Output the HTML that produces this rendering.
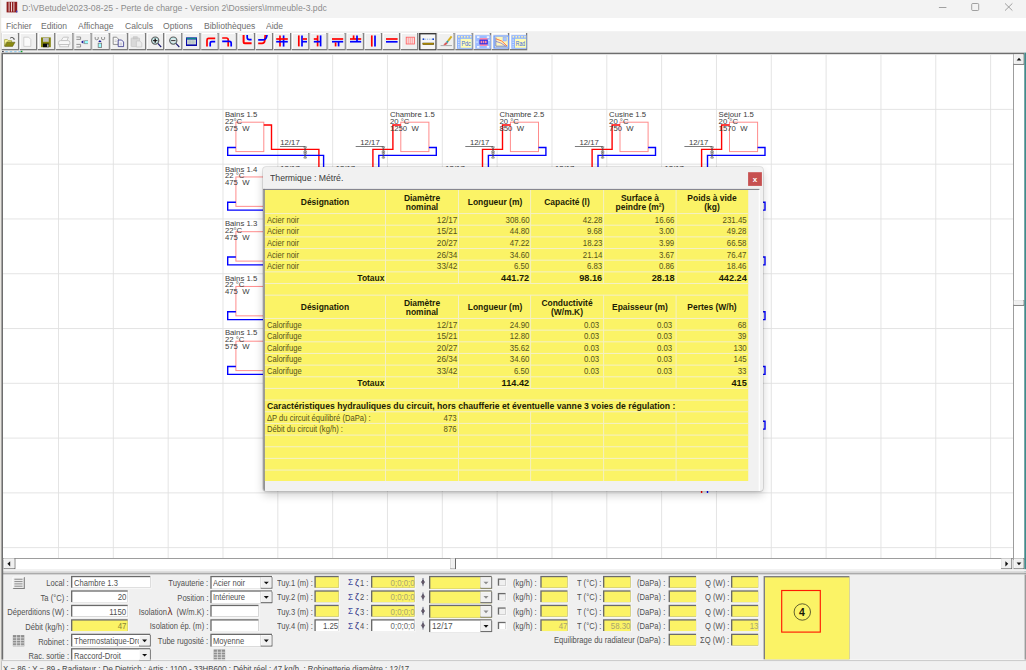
<!DOCTYPE html>
<html lang="fr"><head><meta charset="utf-8"><title>Perte de charge</title>
<style>
html,body{margin:0;padding:0;background:#f0f0f0}
#app{position:relative;width:1026px;height:670px;overflow:hidden;background:#f0f0f0;font-family:"Liberation Sans",sans-serif}
#app div,#app span,#app svg{box-sizing:content-box}
.t{position:absolute;white-space:pre;font-family:"Liberation Sans",sans-serif}
</style></head><body><div id="app">
<svg style="position:absolute;left:0;top:0" width="1026" height="670" viewBox="0 0 1026 670"><rect x="0.00" y="0.00" width="1026.00" height="18.00" fill="#f3f3f3"/><rect x="0.00" y="18.00" width="1026.00" height="13.40" fill="#ffffff"/><rect x="0.00" y="31.40" width="1026.00" height="21.20" fill="#f0f0f0"/><rect x="1.60" y="33.00" width="17.45" height="17.30" fill="#7b7b7b"/><rect x="1.60" y="33.00" width="16.15" height="16.00" fill="#ffffff"/><rect x="2.60" y="34.00" width="15.15" height="15.00" fill="#f0f0f0"/><rect x="19.75" y="33.00" width="17.45" height="17.30" fill="#7b7b7b"/><rect x="19.75" y="33.00" width="16.15" height="16.00" fill="#ffffff"/><rect x="20.75" y="34.00" width="15.15" height="15.00" fill="#f0f0f0"/><rect x="37.90" y="33.00" width="17.45" height="17.30" fill="#7b7b7b"/><rect x="37.90" y="33.00" width="16.15" height="16.00" fill="#ffffff"/><rect x="38.90" y="34.00" width="15.15" height="15.00" fill="#f0f0f0"/><rect x="56.05" y="33.00" width="17.45" height="17.30" fill="#7b7b7b"/><rect x="56.05" y="33.00" width="16.15" height="16.00" fill="#ffffff"/><rect x="57.05" y="34.00" width="15.15" height="15.00" fill="#f0f0f0"/><rect x="74.20" y="33.00" width="17.45" height="17.30" fill="#7b7b7b"/><rect x="74.20" y="33.00" width="16.15" height="16.00" fill="#ffffff"/><rect x="75.20" y="34.00" width="15.15" height="15.00" fill="#f0f0f0"/><rect x="92.35" y="33.00" width="17.45" height="17.30" fill="#7b7b7b"/><rect x="92.35" y="33.00" width="16.15" height="16.00" fill="#ffffff"/><rect x="93.35" y="34.00" width="15.15" height="15.00" fill="#f0f0f0"/><rect x="110.50" y="33.00" width="17.45" height="17.30" fill="#7b7b7b"/><rect x="110.50" y="33.00" width="16.15" height="16.00" fill="#ffffff"/><rect x="111.50" y="34.00" width="15.15" height="15.00" fill="#f0f0f0"/><rect x="128.65" y="33.00" width="17.45" height="17.30" fill="#7b7b7b"/><rect x="128.65" y="33.00" width="16.15" height="16.00" fill="#ffffff"/><rect x="129.65" y="34.00" width="15.15" height="15.00" fill="#f0f0f0"/><rect x="146.80" y="33.00" width="17.45" height="17.30" fill="#7b7b7b"/><rect x="146.80" y="33.00" width="16.15" height="16.00" fill="#ffffff"/><rect x="147.80" y="34.00" width="15.15" height="15.00" fill="#f0f0f0"/><rect x="164.95" y="33.00" width="17.45" height="17.30" fill="#7b7b7b"/><rect x="164.95" y="33.00" width="16.15" height="16.00" fill="#ffffff"/><rect x="165.95" y="34.00" width="15.15" height="15.00" fill="#f0f0f0"/><rect x="183.10" y="33.00" width="17.45" height="17.30" fill="#7b7b7b"/><rect x="183.10" y="33.00" width="16.15" height="16.00" fill="#ffffff"/><rect x="184.10" y="34.00" width="15.15" height="15.00" fill="#f0f0f0"/><rect x="201.25" y="33.00" width="17.45" height="17.30" fill="#7b7b7b"/><rect x="201.25" y="33.00" width="16.15" height="16.00" fill="#ffffff"/><rect x="202.25" y="34.00" width="15.15" height="15.00" fill="#f0f0f0"/><rect x="219.40" y="33.00" width="17.45" height="17.30" fill="#7b7b7b"/><rect x="219.40" y="33.00" width="16.15" height="16.00" fill="#ffffff"/><rect x="220.40" y="34.00" width="15.15" height="15.00" fill="#f0f0f0"/><rect x="237.55" y="33.00" width="17.45" height="17.30" fill="#7b7b7b"/><rect x="237.55" y="33.00" width="16.15" height="16.00" fill="#ffffff"/><rect x="238.55" y="34.00" width="15.15" height="15.00" fill="#f0f0f0"/><rect x="255.70" y="33.00" width="17.45" height="17.30" fill="#7b7b7b"/><rect x="255.70" y="33.00" width="16.15" height="16.00" fill="#ffffff"/><rect x="256.70" y="34.00" width="15.15" height="15.00" fill="#f0f0f0"/><rect x="273.85" y="33.00" width="17.45" height="17.30" fill="#7b7b7b"/><rect x="273.85" y="33.00" width="16.15" height="16.00" fill="#ffffff"/><rect x="274.85" y="34.00" width="15.15" height="15.00" fill="#f0f0f0"/><rect x="292.00" y="33.00" width="17.45" height="17.30" fill="#7b7b7b"/><rect x="292.00" y="33.00" width="16.15" height="16.00" fill="#ffffff"/><rect x="293.00" y="34.00" width="15.15" height="15.00" fill="#f0f0f0"/><rect x="310.15" y="33.00" width="17.45" height="17.30" fill="#7b7b7b"/><rect x="310.15" y="33.00" width="16.15" height="16.00" fill="#ffffff"/><rect x="311.15" y="34.00" width="15.15" height="15.00" fill="#f0f0f0"/><rect x="328.30" y="33.00" width="17.45" height="17.30" fill="#7b7b7b"/><rect x="328.30" y="33.00" width="16.15" height="16.00" fill="#ffffff"/><rect x="329.30" y="34.00" width="15.15" height="15.00" fill="#f0f0f0"/><rect x="346.45" y="33.00" width="17.45" height="17.30" fill="#7b7b7b"/><rect x="346.45" y="33.00" width="16.15" height="16.00" fill="#ffffff"/><rect x="347.45" y="34.00" width="15.15" height="15.00" fill="#f0f0f0"/><rect x="364.60" y="33.00" width="17.45" height="17.30" fill="#7b7b7b"/><rect x="364.60" y="33.00" width="16.15" height="16.00" fill="#ffffff"/><rect x="365.60" y="34.00" width="15.15" height="15.00" fill="#f0f0f0"/><rect x="382.75" y="33.00" width="17.45" height="17.30" fill="#7b7b7b"/><rect x="382.75" y="33.00" width="16.15" height="16.00" fill="#ffffff"/><rect x="383.75" y="34.00" width="15.15" height="15.00" fill="#f0f0f0"/><rect x="400.90" y="33.00" width="17.45" height="17.30" fill="#7b7b7b"/><rect x="400.90" y="33.00" width="16.15" height="16.00" fill="#ffffff"/><rect x="401.90" y="34.00" width="15.15" height="15.00" fill="#f0f0f0"/><rect x="419.05" y="33.00" width="17.45" height="17.30" fill="#3a3a3a"/><rect x="420.45" y="34.40" width="14.95" height="14.80" fill="#f6f6f6"/><rect x="437.20" y="33.00" width="17.45" height="17.30" fill="#7b7b7b"/><rect x="437.20" y="33.00" width="16.15" height="16.00" fill="#ffffff"/><rect x="438.20" y="34.00" width="15.15" height="15.00" fill="#f0f0f0"/><rect x="455.35" y="33.00" width="17.45" height="17.30" fill="#7b7b7b"/><rect x="455.35" y="33.00" width="16.15" height="16.00" fill="#ffffff"/><rect x="456.35" y="34.00" width="15.15" height="15.00" fill="#f0f0f0"/><rect x="473.50" y="33.00" width="17.45" height="17.30" fill="#7b7b7b"/><rect x="473.50" y="33.00" width="16.15" height="16.00" fill="#ffffff"/><rect x="474.50" y="34.00" width="15.15" height="15.00" fill="#f0f0f0"/><rect x="491.65" y="33.00" width="17.45" height="17.30" fill="#7b7b7b"/><rect x="491.65" y="33.00" width="16.15" height="16.00" fill="#ffffff"/><rect x="492.65" y="34.00" width="15.15" height="15.00" fill="#f0f0f0"/><rect x="509.80" y="33.00" width="17.45" height="17.30" fill="#7b7b7b"/><rect x="509.80" y="33.00" width="16.15" height="16.00" fill="#ffffff"/><rect x="510.80" y="34.00" width="15.15" height="15.00" fill="#f0f0f0"/><g>
<path d="M4.6 39.6 L7.4 39.6 L8.2 40.6 L11.6 40.6 L11.6 42 L6.4 42 L4.6 46.2 Z" fill="#fffb9a" stroke="#8a8a20" stroke-width="0.6"/>
<path d="M4.8 46.4 L7 42.2 L15 42.2 L12.6 46.4 Z" fill="#8a8a10" stroke="#55550a" stroke-width="0.5"/>
<path d="M10 38.2 Q12 36.4 13.8 38.2" fill="none" stroke="#222" stroke-width="0.7"/>
<path d="M12.6 38.4 L14.6 38.4 L14.4 40 Z" fill="#111"/>
</g><path d="M23.8 37.2 L28.6 37.2 L30.8 39.4 L30.8 46.4 L23.8 46.4 Z" fill="#fbfbfb" stroke="#c9c9c9" stroke-width="0.8"/><g><rect x="41" y="37.4" width="9.8" height="9.8" fill="#84840c"/>
<rect x="43" y="37.8" width="5.8" height="4" fill="#c4c4c4"/>
<rect x="43" y="43.6" width="5.8" height="3.6" fill="#0a0a0a"/>
<rect x="47.2" y="44.4" width="1.3" height="2.4" fill="#d8d8d8"/></g><g fill="#f8f8f8" stroke="#bdbdbd" stroke-width="0.8">
<path d="M61 40.6 L63.4 37.2 L68.4 37.2 L67 40.6 Z"/>
<path d="M58.6 42.4 Q58.6 40.6 60.4 40.6 L68 40.6 Q69.8 40.6 69.8 42.4 L69.8 44.6 L58.6 44.6 Z"/>
<rect x="59.8" y="44.6" width="8.8" height="2.2"/></g><g fill="none" stroke="#8a8a8a" stroke-width="0.9">
<path d="M76.4 37 L80.6 37 L80.6 39.4 L76.4 39.4"/><path d="M76.4 44.4 L80.6 44.4 L80.6 47 L76.4 47"/></g>
<path d="M81 42 L83.4 40.2 L83.4 43.8 Z" fill="#1a1a9a"/>
<path d="M88 40.8 L84.4 40.8 L84.4 43.6 L88 43.6" fill="#9ff" stroke="#7a7a7a" stroke-width="0.8"/>
<rect x="84.8" y="41.2" width="3.2" height="2" fill="#9ff"/><g fill="none" stroke="#8a8a8a" stroke-width="0.9">
<path d="M95.2 37 L95.2 39.2 Q96.7 40.4 98.2 39.2 L98.2 37"/><path d="M101.6 37 L101.6 39.2 Q103.1 40.4 104.6 39.2 L104.6 37"/></g>
<path d="M99.9 40 L101.6 42 L98.2 42 Z" fill="#1a1a9a"/>
<rect x="98.2" y="43.2" width="3.4" height="4.2" fill="#9ff" stroke="#7a7a7a" stroke-width="0.8"/><path d="M113.2 37.2 L116.6 37.2 L118.4 39 L118.4 44.4 L113.2 44.4 Z" fill="#fafafa" stroke="#777" stroke-width="0.8"/>
<path d="M118.2 40 L121.6 40 L123.6 42 L123.6 46.6 L118.2 46.6 Z" fill="#f4f4fc" stroke="#33338a" stroke-width="0.8"/>
<g stroke="#999" stroke-width="0.5"><line x1="114.6" y1="40" x2="116.8" y2="40"/><line x1="114.6" y1="41.6" x2="116.8" y2="41.6"/><line x1="119.6" y1="43.2" x2="122.2" y2="43.2"/><line x1="119.6" y1="44.8" x2="122.2" y2="44.8"/></g><g fill="#d9d9d9" stroke="#c4c4c4" stroke-width="0.7"><rect x="131.2" y="38" width="8.4" height="8.6" rx="0.6"/><rect x="133.6" y="36.8" width="3.6" height="2" fill="#cfcfcf"/>
<path d="M136.4 41 L139.8 41 L141.8 43 L141.8 47 L136.4 47 Z" fill="#ececec"/></g><line x1="157.79999999999998" y1="43.4" x2="161.2" y2="47" stroke="#14146e" stroke-width="1.1"/>
<circle cx="155.2" cy="40.6" r="3.6" fill="#bdecec" stroke="#5e5e5e" stroke-width="1.15"/>
<circle cx="155.2" cy="40.6" r="2.2" fill="#e8e8e8" stroke="none"/>
<line x1="153.0" y1="40.6" x2="157.39999999999998" y2="40.6" stroke="#222" stroke-width="1.1"/><line x1="155.2" y1="38.4" x2="155.2" y2="42.8" stroke="#111" stroke-width="1.3"/><line x1="175.9" y1="43.4" x2="179.3" y2="47" stroke="#14146e" stroke-width="1.1"/>
<circle cx="173.3" cy="40.6" r="3.6" fill="#bdecec" stroke="#5e5e5e" stroke-width="1.15"/>
<circle cx="173.3" cy="40.6" r="2.2" fill="#e8e8e8" stroke="none"/>
<line x1="171.10000000000002" y1="40.6" x2="175.5" y2="40.6" stroke="#222" stroke-width="0.9"/><rect x="186" y="37.4" width="11" height="8.6" fill="#0a0aa8"/>
<rect x="186.6" y="37.8" width="9.8" height="1.6" fill="#0a8a8a"/>
<rect x="187" y="39.6" width="9" height="4.8" fill="#cfd6d6"/>
<g stroke="#9fb0b0" stroke-width="0.4"><line x1="187" y1="41.2" x2="196" y2="41.2"/><line x1="187" y1="42.8" x2="196" y2="42.8"/><line x1="190" y1="39.6" x2="190" y2="44.4"/><line x1="193" y1="39.6" x2="193" y2="44.4"/></g><path d="M207 46.4 V40 Q207 38.4 208.6 38.4 H215.2" fill="none" stroke="#ff0000" stroke-width="1.7"/><path d="M210.2 46.4 V43 Q210.2 41.6 211.8 41.6 H215.2" fill="none" stroke="#0000ff" stroke-width="1.7"/><path d="M222.2 38 H226.4 Q228.2 38 228.2 39.8 V46.6" fill="none" stroke="#ff0000" stroke-width="1.7"/><path d="M222.2 41.4 H229.4 Q231.2 41.4 231.2 43.2 V46.6" fill="none" stroke="#0000ff" stroke-width="1.7"/><path d="M243.6 35 V42 Q243.6 43.2 244.8 43.2 H251.6" fill="none" stroke="#ff0000" stroke-width="2"/><path d="M247.2 35 V37.4 Q247.2 39.6 249.4 39.6 H251.6" fill="none" stroke="#0000ff" stroke-width="1.7"/><path d="M258.2 43.4 H262 Q264.6 43.4 264.8 40.4 L265.2 35" fill="none" stroke="#ff0000" stroke-width="1.7"/><path d="M258.2 39.8 H263.6 Q266.6 39.4 267 35" fill="none" stroke="#0000ff" stroke-width="1.7"/><path d="M280 35.4 V46.6" fill="none" stroke="#ff0000" stroke-width="1.7"/><path d="M283.6 35.4 V46.6" fill="none" stroke="#0000ff" stroke-width="1.7"/><path d="M276.2 39 H287.8" fill="none" stroke="#ff0000" stroke-width="1.7"/><path d="M276.2 41.7 H287.8" fill="none" stroke="#0000ff" stroke-width="1.7"/><path d="M298.8 35.4 V46.4" fill="none" stroke="#ff0000" stroke-width="1.7"/><path d="M302 35.4 V46.4" fill="none" stroke="#0000ff" stroke-width="1.7"/><path d="M302.6 39 H307" fill="none" stroke="#ff0000" stroke-width="1.7"/><path d="M302 41.7 H307" fill="none" stroke="#0000ff" stroke-width="1.7"/><path d="M317.6 35.4 V46.4" fill="none" stroke="#ff0000" stroke-width="1.7"/><path d="M320.6 35.4 V46.4" fill="none" stroke="#0000ff" stroke-width="1.7"/><path d="M313.8 39 H317.6" fill="none" stroke="#ff0000" stroke-width="1.7"/><path d="M313.8 41.7 H320.6" fill="none" stroke="#0000ff" stroke-width="1.7"/><path d="M332 39 H343.2" fill="none" stroke="#ff0000" stroke-width="1.7"/><path d="M332 41.7 H343.2" fill="none" stroke="#0000ff" stroke-width="1.7"/><path d="M335.6 42.4 V46.4" fill="none" stroke="#ff0000" stroke-width="1.7"/><path d="M338.6 42 V46.4" fill="none" stroke="#0000ff" stroke-width="1.7"/><path d="M350 39 H361.2" fill="none" stroke="#ff0000" stroke-width="1.7"/><path d="M350 41.7 H361.2" fill="none" stroke="#0000ff" stroke-width="1.7"/><path d="M353.6 35.4 V39" fill="none" stroke="#ff0000" stroke-width="1.7"/><path d="M357 35.4 V41.7" fill="none" stroke="#0000ff" stroke-width="1.7"/><path d="M371.8 35.4 V46.6" fill="none" stroke="#ff0000" stroke-width="1.7"/><path d="M375 35.4 V46.6" fill="none" stroke="#0000ff" stroke-width="1.7"/><path d="M386 39 H397.6" fill="none" stroke="#ff0000" stroke-width="1.7"/><path d="M386 41.8 H397.6" fill="none" stroke="#0000ff" stroke-width="1.7"/><rect x="406.2" y="37.2" width="8.2" height="6.8" fill="#fbdcdc" stroke="#ff5a5a" stroke-width="0.8"/>
<g stroke="#ff7a7a" stroke-width="0.6"><line x1="408.3" y1="37.2" x2="408.3" y2="44"/><line x1="410.3" y1="37.2" x2="410.3" y2="44"/><line x1="412.3" y1="37.2" x2="412.3" y2="44"/></g><line x1="423.4" y1="39.2" x2="433.4" y2="39.2" stroke="#8ab0e0" stroke-width="1" stroke-dasharray="1 0.8"/>
<rect x="422.6" y="38.4" width="1.6" height="1.6" fill="#1040d0"/><rect x="432.4" y="38.4" width="1.6" height="1.6" fill="#1040d0"/>
<rect x="422.8" y="43" width="11" height="1.7" fill="#c8a000" stroke="#4a3800" stroke-width="0.5"/><line x1="440.6" y1="45.6" x2="452" y2="45.6" stroke="#8c8c8c" stroke-width="0.7"/>
<line x1="448" y1="41" x2="451.6" y2="36.4" stroke="#d6b020" stroke-width="2"/>
<line x1="446.4" y1="43" x2="448" y2="41" stroke="#2a9a9a" stroke-width="2"/>
<path d="M443.2 45.6 Q444 43 446.4 42 L447.6 43.6 Q446 45.8 443.2 45.6 Z" fill="#e05050" stroke="#c8c8c8" stroke-width="0.4"/><rect x="457" y="35.2" width="15.2" height="13.6" fill="#8fb4ff"/><rect x="460.6" y="38.8" width="11" height="9" fill="#fffcb4"/><rect x="458.2" y="36" width="1.5" height="1.6" fill="#fff3b0"/><rect x="461.09999999999997" y="36" width="1.5" height="1.6" fill="#fff3b0"/><rect x="464.0" y="36" width="1.5" height="1.6" fill="#fff3b0"/><rect x="466.9" y="36" width="1.5" height="1.6" fill="#fff3b0"/><rect x="469.8" y="36" width="1.5" height="1.6" fill="#fff3b0"/><rect x="458" y="39.4" width="1.5" height="1.3" fill="#cfe0ff"/><rect x="458" y="41.699999999999996" width="1.5" height="1.3" fill="#cfe0ff"/><rect x="458" y="44.0" width="1.5" height="1.3" fill="#cfe0ff"/><rect x="458" y="46.3" width="1.5" height="1.3" fill="#cfe0ff"/><text x="461.4" y="46.2" font-family="Liberation Sans, sans-serif" font-size="6.6" fill="#3a6ae0" textLength="9.4" lengthAdjust="spacingAndGlyphs">Pdc</text><rect x="475.2" y="35.2" width="15.6" height="13.6" fill="#9dbdff"/>
<rect x="479.8" y="38" width="7.6" height="8" fill="#ff8aa8"/>
<rect x="479.4" y="39.6" width="8.4" height="4.8" fill="#3030e8"/>
<g fill="#ff8aa8"><rect x="480.6" y="40.8" width="1.6" height="2.4"/><rect x="482.8" y="40.8" width="1.6" height="2.4"/><rect x="485" y="40.8" width="1.6" height="2.4"/></g>
<g fill="#eef3ff"><rect x="477" y="36.2" width="2.4" height="1.8"/><rect x="486.8" y="36.2" width="2.4" height="1.8"/><rect x="477" y="46" width="2.4" height="1.8"/><rect x="486.8" y="46" width="2.4" height="1.8"/><rect x="476.2" y="41.6" width="2" height="0.9"/><rect x="488" y="39.8" width="2" height="0.9"/></g><rect x="493.4" y="35.4" width="15.6" height="13.2" fill="#6f9cff"/>
<rect x="494.8" y="36.6" width="13" height="10.8" fill="#fff6b8"/>
<path d="M495.8 37.4 V46.2 H507.4" fill="none" stroke="#3a5ae0" stroke-width="0.7"/>
<path d="M496 38.8 Q502 39.6 507 46" fill="none" stroke="#ff6a3a" stroke-width="0.9"/>
<path d="M496 41.4 Q501 42.4 505.6 46" fill="none" stroke="#5a4ae0" stroke-width="0.6"/>
<rect x="503" y="37.4" width="3.2" height="3.6" fill="#a8c4ff" stroke="#6f9cff" stroke-width="0.4"/><rect x="511.4" y="35.2" width="15.2" height="13.6" fill="#8fb4ff"/><rect x="515.0" y="38.8" width="11" height="9" fill="#fffcb4"/><rect x="512.6" y="36" width="1.5" height="1.6" fill="#fff3b0"/><rect x="515.5" y="36" width="1.5" height="1.6" fill="#fff3b0"/><rect x="518.4" y="36" width="1.5" height="1.6" fill="#fff3b0"/><rect x="521.3000000000001" y="36" width="1.5" height="1.6" fill="#fff3b0"/><rect x="524.2" y="36" width="1.5" height="1.6" fill="#fff3b0"/><rect x="512.4" y="39.4" width="1.5" height="1.3" fill="#cfe0ff"/><rect x="512.4" y="41.699999999999996" width="1.5" height="1.3" fill="#cfe0ff"/><rect x="512.4" y="44.0" width="1.5" height="1.3" fill="#cfe0ff"/><rect x="512.4" y="46.3" width="1.5" height="1.3" fill="#cfe0ff"/><text x="515.8" y="46.2" font-family="Liberation Sans, sans-serif" font-size="6.6" fill="#3a6ae0" textLength="9.4" lengthAdjust="spacingAndGlyphs">Rad</text><g><rect x="2.2" y="51" width="1.4" height="1.2" fill="#223"/><rect x="5.4" y="51" width="2.4" height="1.4" fill="#9cd0f0"/><rect x="9.8" y="51" width="2.4" height="1.4" fill="#9cd0f0"/><rect x="14.2" y="51" width="2.4" height="1.4" fill="#9cd0f0"/><rect x="18.4" y="51" width="2.4" height="1.4" fill="#9cd0f0"/><rect x="20.8" y="50.8" width="1.6" height="1.6" fill="#10a020"/></g><rect x="0.00" y="52.60" width="1026.00" height="522.00" fill="#f0f0f0"/><rect x="1.30" y="52.70" width="1023.10" height="507.30" fill="#6e6e6e"/><rect x="3.00" y="54.20" width="1010.20" height="504.00" fill="#ffffff"/><defs><clipPath id="cv"><rect x="3.0" y="54.2" width="1010.2" height="504.00000000000006"/></clipPath></defs><g clip-path="url(#cv)"><path d="M58.50 54.2V558.2M113.33 54.2V558.2M168.16 54.2V558.2M222.99 54.2V558.2M277.82 54.2V558.2M332.65 54.2V558.2M387.48 54.2V558.2M442.31 54.2V558.2M497.14 54.2V558.2M551.97 54.2V558.2M606.80 54.2V558.2M661.63 54.2V558.2M716.46 54.2V558.2M771.29 54.2V558.2M826.12 54.2V558.2M880.95 54.2V558.2M935.78 54.2V558.2M990.61 54.2V558.2M3.0 109.40H1013.2M3.0 164.18H1013.2M3.0 218.96H1013.2M3.0 273.74H1013.2M3.0 328.52H1013.2M3.0 383.30H1013.2M3.0 438.08H1013.2M3.0 492.86H1013.2M3.0 547.64H1013.2" stroke="#e1e1e1" stroke-width="0.9" fill="none"/><rect x="235.90" y="122.20" width="27.9" height="29.4" fill="none" stroke="#ff8c8c" stroke-width="1"/><path d="M263.80 125.00H271.50V149.40H318.90V400" fill="none" stroke="#ff0000" stroke-width="1.4"/><path d="M235.90 147.50H227.70V155.40H323.60V400" fill="none" stroke="#0000ff" stroke-width="1.4"/><line x1="280.00" y1="146.50" x2="305.20" y2="146.50" stroke="#444" stroke-width="0.7"/><text x="280.30" y="145.00" font-family="Liberation Sans, sans-serif" font-size="7.75" fill="#3c3c3c" xml:space="preserve">12/17</text><path d="M303.70 146.80H306.70L305.20 149.40Z M303.70 152.00H306.70L305.20 149.40Z" fill="none" stroke="#4a4a4a" stroke-width="0.5"/><line x1="305.20" y1="146.20" x2="305.20" y2="152.60" stroke="#4a4a4a" stroke-width="0.5"/><path d="M303.70 152.80H306.70L305.20 155.40Z M303.70 158.00H306.70L305.20 155.40Z" fill="none" stroke="#4a4a4a" stroke-width="0.5"/><line x1="305.20" y1="152.20" x2="305.20" y2="158.60" stroke="#4a4a4a" stroke-width="0.5"/><text x="224.90" y="116.90" font-family="Liberation Sans, sans-serif" font-size="7.75" fill="#3c3c3c" xml:space="preserve">Bains 1.5</text><text x="224.90" y="123.50" font-family="Liberation Sans, sans-serif" font-size="7.75" fill="#3c3c3c" xml:space="preserve">22°C</text><text x="224.90" y="130.50" font-family="Liberation Sans, sans-serif" font-size="7.75" fill="#3c3c3c" xml:space="preserve">675  W</text><rect x="235.90" y="176.95" width="27.9" height="29.4" fill="none" stroke="#ff8c8c" stroke-width="1"/><path d="M263.80 179.75H271.50V204.15H318.90" fill="none" stroke="#ff0000" stroke-width="1.4"/><path d="M235.90 202.25H227.70V210.15H323.60" fill="none" stroke="#0000ff" stroke-width="1.4"/><line x1="280.00" y1="201.25" x2="305.20" y2="201.25" stroke="#444" stroke-width="0.7"/><text x="280.30" y="199.75" font-family="Liberation Sans, sans-serif" font-size="7.75" fill="#3c3c3c" xml:space="preserve">12/17</text><path d="M303.70 201.55H306.70L305.20 204.15Z M303.70 206.75H306.70L305.20 204.15Z" fill="none" stroke="#4a4a4a" stroke-width="0.5"/><line x1="305.20" y1="200.95" x2="305.20" y2="207.35" stroke="#4a4a4a" stroke-width="0.5"/><path d="M303.70 207.55H306.70L305.20 210.15Z M303.70 212.75H306.70L305.20 210.15Z" fill="none" stroke="#4a4a4a" stroke-width="0.5"/><line x1="305.20" y1="206.95" x2="305.20" y2="213.35" stroke="#4a4a4a" stroke-width="0.5"/><text x="280.30" y="171.45" font-family="Liberation Sans, sans-serif" font-size="7.75" fill="#3c3c3c" xml:space="preserve">12/17</text><text x="224.90" y="171.53" font-family="Liberation Sans, sans-serif" font-size="7.75" fill="#3c3c3c" xml:space="preserve">Bains 1.4</text><text x="224.90" y="178.13" font-family="Liberation Sans, sans-serif" font-size="7.75" fill="#3c3c3c" xml:space="preserve">22 °C</text><text x="224.90" y="185.13" font-family="Liberation Sans, sans-serif" font-size="7.75" fill="#3c3c3c" xml:space="preserve">475  W</text><rect x="235.90" y="231.70" width="27.9" height="29.4" fill="none" stroke="#ff8c8c" stroke-width="1"/><path d="M263.80 234.50H271.50V258.90H318.90" fill="none" stroke="#ff0000" stroke-width="1.4"/><path d="M235.90 257.00H227.70V264.90H323.60" fill="none" stroke="#0000ff" stroke-width="1.4"/><line x1="280.00" y1="256.00" x2="305.20" y2="256.00" stroke="#444" stroke-width="0.7"/><text x="280.30" y="254.50" font-family="Liberation Sans, sans-serif" font-size="7.75" fill="#3c3c3c" xml:space="preserve">12/17</text><path d="M303.70 256.30H306.70L305.20 258.90Z M303.70 261.50H306.70L305.20 258.90Z" fill="none" stroke="#4a4a4a" stroke-width="0.5"/><line x1="305.20" y1="255.70" x2="305.20" y2="262.10" stroke="#4a4a4a" stroke-width="0.5"/><path d="M303.70 262.30H306.70L305.20 264.90Z M303.70 267.50H306.70L305.20 264.90Z" fill="none" stroke="#4a4a4a" stroke-width="0.5"/><line x1="305.20" y1="261.70" x2="305.20" y2="268.10" stroke="#4a4a4a" stroke-width="0.5"/><text x="280.30" y="226.20" font-family="Liberation Sans, sans-serif" font-size="7.75" fill="#3c3c3c" xml:space="preserve">12/17</text><text x="224.90" y="226.16" font-family="Liberation Sans, sans-serif" font-size="7.75" fill="#3c3c3c" xml:space="preserve">Bains 1.3</text><text x="224.90" y="232.76" font-family="Liberation Sans, sans-serif" font-size="7.75" fill="#3c3c3c" xml:space="preserve">22°C</text><text x="224.90" y="239.76" font-family="Liberation Sans, sans-serif" font-size="7.75" fill="#3c3c3c" xml:space="preserve">475  W</text><rect x="235.90" y="286.45" width="27.9" height="29.4" fill="none" stroke="#ff8c8c" stroke-width="1"/><path d="M263.80 289.25H271.50V313.65H318.90" fill="none" stroke="#ff0000" stroke-width="1.4"/><path d="M235.90 311.75H227.70V319.65H323.60" fill="none" stroke="#0000ff" stroke-width="1.4"/><line x1="280.00" y1="310.75" x2="305.20" y2="310.75" stroke="#444" stroke-width="0.7"/><text x="280.30" y="309.25" font-family="Liberation Sans, sans-serif" font-size="7.75" fill="#3c3c3c" xml:space="preserve">12/17</text><path d="M303.70 311.05H306.70L305.20 313.65Z M303.70 316.25H306.70L305.20 313.65Z" fill="none" stroke="#4a4a4a" stroke-width="0.5"/><line x1="305.20" y1="310.45" x2="305.20" y2="316.85" stroke="#4a4a4a" stroke-width="0.5"/><path d="M303.70 317.05H306.70L305.20 319.65Z M303.70 322.25H306.70L305.20 319.65Z" fill="none" stroke="#4a4a4a" stroke-width="0.5"/><line x1="305.20" y1="316.45" x2="305.20" y2="322.85" stroke="#4a4a4a" stroke-width="0.5"/><text x="280.30" y="280.95" font-family="Liberation Sans, sans-serif" font-size="7.75" fill="#3c3c3c" xml:space="preserve">12/17</text><text x="224.90" y="280.79" font-family="Liberation Sans, sans-serif" font-size="7.75" fill="#3c3c3c" xml:space="preserve">Bains 1.5</text><text x="224.90" y="287.39" font-family="Liberation Sans, sans-serif" font-size="7.75" fill="#3c3c3c" xml:space="preserve">22 °C</text><text x="224.90" y="294.39" font-family="Liberation Sans, sans-serif" font-size="7.75" fill="#3c3c3c" xml:space="preserve">475  W</text><rect x="235.90" y="341.20" width="27.9" height="29.4" fill="none" stroke="#ff8c8c" stroke-width="1"/><path d="M263.80 344.00H271.50V368.40H318.90" fill="none" stroke="#ff0000" stroke-width="1.4"/><path d="M235.90 366.50H227.70V374.40H323.60" fill="none" stroke="#0000ff" stroke-width="1.4"/><line x1="280.00" y1="365.50" x2="305.20" y2="365.50" stroke="#444" stroke-width="0.7"/><text x="280.30" y="364.00" font-family="Liberation Sans, sans-serif" font-size="7.75" fill="#3c3c3c" xml:space="preserve">12/17</text><path d="M303.70 365.80H306.70L305.20 368.40Z M303.70 371.00H306.70L305.20 368.40Z" fill="none" stroke="#4a4a4a" stroke-width="0.5"/><line x1="305.20" y1="365.20" x2="305.20" y2="371.60" stroke="#4a4a4a" stroke-width="0.5"/><path d="M303.70 371.80H306.70L305.20 374.40Z M303.70 377.00H306.70L305.20 374.40Z" fill="none" stroke="#4a4a4a" stroke-width="0.5"/><line x1="305.20" y1="371.20" x2="305.20" y2="377.60" stroke="#4a4a4a" stroke-width="0.5"/><text x="280.30" y="335.70" font-family="Liberation Sans, sans-serif" font-size="7.75" fill="#3c3c3c" xml:space="preserve">12/17</text><text x="224.90" y="335.42" font-family="Liberation Sans, sans-serif" font-size="7.75" fill="#3c3c3c" xml:space="preserve">Bains 1.5</text><text x="224.90" y="342.02" font-family="Liberation Sans, sans-serif" font-size="7.75" fill="#3c3c3c" xml:space="preserve">22 °C</text><text x="224.90" y="349.02" font-family="Liberation Sans, sans-serif" font-size="7.75" fill="#3c3c3c" xml:space="preserve">575  W</text><rect x="400.80" y="122.20" width="28.1" height="29.4" fill="none" stroke="#ff8c8c" stroke-width="1"/><path d="M400.80 125.00H392.90V149.40H372.90V440" fill="none" stroke="#ff0000" stroke-width="1.4"/><path d="M428.90 147.50H436.30V155.40H378.80V440" fill="none" stroke="#0000ff" stroke-width="1.4"/><line x1="355.70" y1="146.50" x2="383.40" y2="146.50" stroke="#444" stroke-width="0.7"/><text x="360.30" y="145.00" font-family="Liberation Sans, sans-serif" font-size="7.75" fill="#3c3c3c" xml:space="preserve">12/17</text><path d="M381.90 146.80H384.90L383.40 149.40Z M381.90 152.00H384.90L383.40 149.40Z" fill="none" stroke="#4a4a4a" stroke-width="0.5"/><line x1="383.40" y1="146.20" x2="383.40" y2="152.60" stroke="#4a4a4a" stroke-width="0.5"/><path d="M381.90 152.80H384.90L383.40 155.40Z M381.90 158.00H384.90L383.40 155.40Z" fill="none" stroke="#4a4a4a" stroke-width="0.5"/><line x1="383.40" y1="152.20" x2="383.40" y2="158.60" stroke="#4a4a4a" stroke-width="0.5"/><text x="389.90" y="116.90" font-family="Liberation Sans, sans-serif" font-size="7.75" fill="#3c3c3c" xml:space="preserve">Chambre 1.5</text><text x="389.90" y="123.50" font-family="Liberation Sans, sans-serif" font-size="7.75" fill="#3c3c3c" xml:space="preserve">20 °C</text><text x="389.90" y="130.50" font-family="Liberation Sans, sans-serif" font-size="7.75" fill="#3c3c3c" xml:space="preserve">1250  W</text><rect x="400.80" y="176.95" width="28.1" height="29.4" fill="none" stroke="#ff8c8c" stroke-width="1"/><path d="M400.80 179.75H392.90V204.15H372.90" fill="none" stroke="#ff0000" stroke-width="1.4"/><path d="M428.90 202.25H436.30V210.15H378.80" fill="none" stroke="#0000ff" stroke-width="1.4"/><line x1="355.70" y1="201.25" x2="383.40" y2="201.25" stroke="#444" stroke-width="0.7"/><text x="360.30" y="199.75" font-family="Liberation Sans, sans-serif" font-size="7.75" fill="#3c3c3c" xml:space="preserve">12/17</text><path d="M381.90 201.55H384.90L383.40 204.15Z M381.90 206.75H384.90L383.40 204.15Z" fill="none" stroke="#4a4a4a" stroke-width="0.5"/><line x1="383.40" y1="200.95" x2="383.40" y2="207.35" stroke="#4a4a4a" stroke-width="0.5"/><path d="M381.90 207.55H384.90L383.40 210.15Z M381.90 212.75H384.90L383.40 210.15Z" fill="none" stroke="#4a4a4a" stroke-width="0.5"/><line x1="383.40" y1="206.95" x2="383.40" y2="213.35" stroke="#4a4a4a" stroke-width="0.5"/><text x="335.70" y="171.45" font-family="Liberation Sans, sans-serif" font-size="7.75" fill="#3c3c3c" xml:space="preserve">12/17</text><text x="389.90" y="171.53" font-family="Liberation Sans, sans-serif" font-size="7.75" fill="#3c3c3c" xml:space="preserve">Chambre 1.4</text><text x="389.90" y="178.13" font-family="Liberation Sans, sans-serif" font-size="7.75" fill="#3c3c3c" xml:space="preserve">20 °C</text><text x="389.90" y="185.13" font-family="Liberation Sans, sans-serif" font-size="7.75" fill="#3c3c3c" xml:space="preserve">1150  W</text><rect x="400.80" y="231.70" width="28.1" height="29.4" fill="none" stroke="#ff8c8c" stroke-width="1"/><path d="M400.80 234.50H392.90V258.90H372.90" fill="none" stroke="#ff0000" stroke-width="1.4"/><path d="M428.90 257.00H436.30V264.90H378.80" fill="none" stroke="#0000ff" stroke-width="1.4"/><line x1="355.70" y1="256.00" x2="383.40" y2="256.00" stroke="#444" stroke-width="0.7"/><text x="360.30" y="254.50" font-family="Liberation Sans, sans-serif" font-size="7.75" fill="#3c3c3c" xml:space="preserve">12/17</text><path d="M381.90 256.30H384.90L383.40 258.90Z M381.90 261.50H384.90L383.40 258.90Z" fill="none" stroke="#4a4a4a" stroke-width="0.5"/><line x1="383.40" y1="255.70" x2="383.40" y2="262.10" stroke="#4a4a4a" stroke-width="0.5"/><path d="M381.90 262.30H384.90L383.40 264.90Z M381.90 267.50H384.90L383.40 264.90Z" fill="none" stroke="#4a4a4a" stroke-width="0.5"/><line x1="383.40" y1="261.70" x2="383.40" y2="268.10" stroke="#4a4a4a" stroke-width="0.5"/><text x="335.70" y="226.20" font-family="Liberation Sans, sans-serif" font-size="7.75" fill="#3c3c3c" xml:space="preserve">12/17</text><text x="389.90" y="226.16" font-family="Liberation Sans, sans-serif" font-size="7.75" fill="#3c3c3c" xml:space="preserve">Chambre 1.3</text><text x="389.90" y="232.76" font-family="Liberation Sans, sans-serif" font-size="7.75" fill="#3c3c3c" xml:space="preserve">20 °C</text><text x="389.90" y="239.76" font-family="Liberation Sans, sans-serif" font-size="7.75" fill="#3c3c3c" xml:space="preserve">1150  W</text><rect x="400.80" y="286.45" width="28.1" height="29.4" fill="none" stroke="#ff8c8c" stroke-width="1"/><path d="M400.80 289.25H392.90V313.65H372.90" fill="none" stroke="#ff0000" stroke-width="1.4"/><path d="M428.90 311.75H436.30V319.65H378.80" fill="none" stroke="#0000ff" stroke-width="1.4"/><line x1="355.70" y1="310.75" x2="383.40" y2="310.75" stroke="#444" stroke-width="0.7"/><text x="360.30" y="309.25" font-family="Liberation Sans, sans-serif" font-size="7.75" fill="#3c3c3c" xml:space="preserve">12/17</text><path d="M381.90 311.05H384.90L383.40 313.65Z M381.90 316.25H384.90L383.40 313.65Z" fill="none" stroke="#4a4a4a" stroke-width="0.5"/><line x1="383.40" y1="310.45" x2="383.40" y2="316.85" stroke="#4a4a4a" stroke-width="0.5"/><path d="M381.90 317.05H384.90L383.40 319.65Z M381.90 322.25H384.90L383.40 319.65Z" fill="none" stroke="#4a4a4a" stroke-width="0.5"/><line x1="383.40" y1="316.45" x2="383.40" y2="322.85" stroke="#4a4a4a" stroke-width="0.5"/><text x="335.70" y="280.95" font-family="Liberation Sans, sans-serif" font-size="7.75" fill="#3c3c3c" xml:space="preserve">12/17</text><text x="389.90" y="280.79" font-family="Liberation Sans, sans-serif" font-size="7.75" fill="#3c3c3c" xml:space="preserve">Chambre 1.2</text><text x="389.90" y="287.39" font-family="Liberation Sans, sans-serif" font-size="7.75" fill="#3c3c3c" xml:space="preserve">20 °C</text><text x="389.90" y="294.39" font-family="Liberation Sans, sans-serif" font-size="7.75" fill="#3c3c3c" xml:space="preserve">1150  W</text><rect x="400.80" y="341.20" width="28.1" height="29.4" fill="none" stroke="#ff8c8c" stroke-width="1"/><path d="M400.80 344.00H392.90V368.40H372.90" fill="none" stroke="#ff0000" stroke-width="1.4"/><path d="M428.90 366.50H436.30V374.40H378.80" fill="none" stroke="#0000ff" stroke-width="1.4"/><line x1="355.70" y1="365.50" x2="383.40" y2="365.50" stroke="#444" stroke-width="0.7"/><text x="360.30" y="364.00" font-family="Liberation Sans, sans-serif" font-size="7.75" fill="#3c3c3c" xml:space="preserve">12/17</text><path d="M381.90 365.80H384.90L383.40 368.40Z M381.90 371.00H384.90L383.40 368.40Z" fill="none" stroke="#4a4a4a" stroke-width="0.5"/><line x1="383.40" y1="365.20" x2="383.40" y2="371.60" stroke="#4a4a4a" stroke-width="0.5"/><path d="M381.90 371.80H384.90L383.40 374.40Z M381.90 377.00H384.90L383.40 374.40Z" fill="none" stroke="#4a4a4a" stroke-width="0.5"/><line x1="383.40" y1="371.20" x2="383.40" y2="377.60" stroke="#4a4a4a" stroke-width="0.5"/><text x="335.70" y="335.70" font-family="Liberation Sans, sans-serif" font-size="7.75" fill="#3c3c3c" xml:space="preserve">12/17</text><text x="389.90" y="335.42" font-family="Liberation Sans, sans-serif" font-size="7.75" fill="#3c3c3c" xml:space="preserve">Chambre 1.1</text><text x="389.90" y="342.02" font-family="Liberation Sans, sans-serif" font-size="7.75" fill="#3c3c3c" xml:space="preserve">20 °C</text><text x="389.90" y="349.02" font-family="Liberation Sans, sans-serif" font-size="7.75" fill="#3c3c3c" xml:space="preserve">1250  W</text><rect x="510.40" y="122.20" width="28.1" height="29.4" fill="none" stroke="#ff8c8c" stroke-width="1"/><path d="M510.40 125.00H502.50V149.40H482.50V440" fill="none" stroke="#ff0000" stroke-width="1.4"/><path d="M538.50 147.50H545.90V155.40H488.40V440" fill="none" stroke="#0000ff" stroke-width="1.4"/><line x1="465.30" y1="146.50" x2="493.00" y2="146.50" stroke="#444" stroke-width="0.7"/><text x="469.90" y="145.00" font-family="Liberation Sans, sans-serif" font-size="7.75" fill="#3c3c3c" xml:space="preserve">12/17</text><path d="M491.50 146.80H494.50L493.00 149.40Z M491.50 152.00H494.50L493.00 149.40Z" fill="none" stroke="#4a4a4a" stroke-width="0.5"/><line x1="493.00" y1="146.20" x2="493.00" y2="152.60" stroke="#4a4a4a" stroke-width="0.5"/><path d="M491.50 152.80H494.50L493.00 155.40Z M491.50 158.00H494.50L493.00 155.40Z" fill="none" stroke="#4a4a4a" stroke-width="0.5"/><line x1="493.00" y1="152.20" x2="493.00" y2="158.60" stroke="#4a4a4a" stroke-width="0.5"/><text x="499.50" y="116.90" font-family="Liberation Sans, sans-serif" font-size="7.75" fill="#3c3c3c" xml:space="preserve">Chambre 2.5</text><text x="499.50" y="123.50" font-family="Liberation Sans, sans-serif" font-size="7.75" fill="#3c3c3c" xml:space="preserve">20 °C</text><text x="499.50" y="130.50" font-family="Liberation Sans, sans-serif" font-size="7.75" fill="#3c3c3c" xml:space="preserve">850  W</text><rect x="510.40" y="176.95" width="28.1" height="29.4" fill="none" stroke="#ff8c8c" stroke-width="1"/><path d="M510.40 179.75H502.50V204.15H482.50" fill="none" stroke="#ff0000" stroke-width="1.4"/><path d="M538.50 202.25H545.90V210.15H488.40" fill="none" stroke="#0000ff" stroke-width="1.4"/><line x1="465.30" y1="201.25" x2="493.00" y2="201.25" stroke="#444" stroke-width="0.7"/><text x="469.90" y="199.75" font-family="Liberation Sans, sans-serif" font-size="7.75" fill="#3c3c3c" xml:space="preserve">12/17</text><path d="M491.50 201.55H494.50L493.00 204.15Z M491.50 206.75H494.50L493.00 204.15Z" fill="none" stroke="#4a4a4a" stroke-width="0.5"/><line x1="493.00" y1="200.95" x2="493.00" y2="207.35" stroke="#4a4a4a" stroke-width="0.5"/><path d="M491.50 207.55H494.50L493.00 210.15Z M491.50 212.75H494.50L493.00 210.15Z" fill="none" stroke="#4a4a4a" stroke-width="0.5"/><line x1="493.00" y1="206.95" x2="493.00" y2="213.35" stroke="#4a4a4a" stroke-width="0.5"/><text x="445.30" y="171.45" font-family="Liberation Sans, sans-serif" font-size="7.75" fill="#3c3c3c" xml:space="preserve">12/17</text><text x="499.50" y="171.53" font-family="Liberation Sans, sans-serif" font-size="7.75" fill="#3c3c3c" xml:space="preserve">Chambre 2.4</text><text x="499.50" y="178.13" font-family="Liberation Sans, sans-serif" font-size="7.75" fill="#3c3c3c" xml:space="preserve">20 °C</text><text x="499.50" y="185.13" font-family="Liberation Sans, sans-serif" font-size="7.75" fill="#3c3c3c" xml:space="preserve">750  W</text><rect x="510.40" y="231.70" width="28.1" height="29.4" fill="none" stroke="#ff8c8c" stroke-width="1"/><path d="M510.40 234.50H502.50V258.90H482.50" fill="none" stroke="#ff0000" stroke-width="1.4"/><path d="M538.50 257.00H545.90V264.90H488.40" fill="none" stroke="#0000ff" stroke-width="1.4"/><line x1="465.30" y1="256.00" x2="493.00" y2="256.00" stroke="#444" stroke-width="0.7"/><text x="469.90" y="254.50" font-family="Liberation Sans, sans-serif" font-size="7.75" fill="#3c3c3c" xml:space="preserve">12/17</text><path d="M491.50 256.30H494.50L493.00 258.90Z M491.50 261.50H494.50L493.00 258.90Z" fill="none" stroke="#4a4a4a" stroke-width="0.5"/><line x1="493.00" y1="255.70" x2="493.00" y2="262.10" stroke="#4a4a4a" stroke-width="0.5"/><path d="M491.50 262.30H494.50L493.00 264.90Z M491.50 267.50H494.50L493.00 264.90Z" fill="none" stroke="#4a4a4a" stroke-width="0.5"/><line x1="493.00" y1="261.70" x2="493.00" y2="268.10" stroke="#4a4a4a" stroke-width="0.5"/><text x="445.30" y="226.20" font-family="Liberation Sans, sans-serif" font-size="7.75" fill="#3c3c3c" xml:space="preserve">12/17</text><text x="499.50" y="226.16" font-family="Liberation Sans, sans-serif" font-size="7.75" fill="#3c3c3c" xml:space="preserve">Chambre 2.3</text><text x="499.50" y="232.76" font-family="Liberation Sans, sans-serif" font-size="7.75" fill="#3c3c3c" xml:space="preserve">20 °C</text><text x="499.50" y="239.76" font-family="Liberation Sans, sans-serif" font-size="7.75" fill="#3c3c3c" xml:space="preserve">750  W</text><rect x="510.40" y="286.45" width="28.1" height="29.4" fill="none" stroke="#ff8c8c" stroke-width="1"/><path d="M510.40 289.25H502.50V313.65H482.50" fill="none" stroke="#ff0000" stroke-width="1.4"/><path d="M538.50 311.75H545.90V319.65H488.40" fill="none" stroke="#0000ff" stroke-width="1.4"/><line x1="465.30" y1="310.75" x2="493.00" y2="310.75" stroke="#444" stroke-width="0.7"/><text x="469.90" y="309.25" font-family="Liberation Sans, sans-serif" font-size="7.75" fill="#3c3c3c" xml:space="preserve">12/17</text><path d="M491.50 311.05H494.50L493.00 313.65Z M491.50 316.25H494.50L493.00 313.65Z" fill="none" stroke="#4a4a4a" stroke-width="0.5"/><line x1="493.00" y1="310.45" x2="493.00" y2="316.85" stroke="#4a4a4a" stroke-width="0.5"/><path d="M491.50 317.05H494.50L493.00 319.65Z M491.50 322.25H494.50L493.00 319.65Z" fill="none" stroke="#4a4a4a" stroke-width="0.5"/><line x1="493.00" y1="316.45" x2="493.00" y2="322.85" stroke="#4a4a4a" stroke-width="0.5"/><text x="445.30" y="280.95" font-family="Liberation Sans, sans-serif" font-size="7.75" fill="#3c3c3c" xml:space="preserve">12/17</text><text x="499.50" y="280.79" font-family="Liberation Sans, sans-serif" font-size="7.75" fill="#3c3c3c" xml:space="preserve">Chambre 2.2</text><text x="499.50" y="287.39" font-family="Liberation Sans, sans-serif" font-size="7.75" fill="#3c3c3c" xml:space="preserve">20 °C</text><text x="499.50" y="294.39" font-family="Liberation Sans, sans-serif" font-size="7.75" fill="#3c3c3c" xml:space="preserve">750  W</text><rect x="510.40" y="341.20" width="28.1" height="29.4" fill="none" stroke="#ff8c8c" stroke-width="1"/><path d="M510.40 344.00H502.50V368.40H482.50" fill="none" stroke="#ff0000" stroke-width="1.4"/><path d="M538.50 366.50H545.90V374.40H488.40" fill="none" stroke="#0000ff" stroke-width="1.4"/><line x1="465.30" y1="365.50" x2="493.00" y2="365.50" stroke="#444" stroke-width="0.7"/><text x="469.90" y="364.00" font-family="Liberation Sans, sans-serif" font-size="7.75" fill="#3c3c3c" xml:space="preserve">12/17</text><path d="M491.50 365.80H494.50L493.00 368.40Z M491.50 371.00H494.50L493.00 368.40Z" fill="none" stroke="#4a4a4a" stroke-width="0.5"/><line x1="493.00" y1="365.20" x2="493.00" y2="371.60" stroke="#4a4a4a" stroke-width="0.5"/><path d="M491.50 371.80H494.50L493.00 374.40Z M491.50 377.00H494.50L493.00 374.40Z" fill="none" stroke="#4a4a4a" stroke-width="0.5"/><line x1="493.00" y1="371.20" x2="493.00" y2="377.60" stroke="#4a4a4a" stroke-width="0.5"/><text x="445.30" y="335.70" font-family="Liberation Sans, sans-serif" font-size="7.75" fill="#3c3c3c" xml:space="preserve">12/17</text><text x="499.50" y="335.42" font-family="Liberation Sans, sans-serif" font-size="7.75" fill="#3c3c3c" xml:space="preserve">Chambre 2.1</text><text x="499.50" y="342.02" font-family="Liberation Sans, sans-serif" font-size="7.75" fill="#3c3c3c" xml:space="preserve">20 °C</text><text x="499.50" y="349.02" font-family="Liberation Sans, sans-serif" font-size="7.75" fill="#3c3c3c" xml:space="preserve">850  W</text><rect x="620.00" y="122.20" width="28.1" height="29.4" fill="none" stroke="#ff8c8c" stroke-width="1"/><path d="M620.00 125.00H612.10V149.40H592.10V440" fill="none" stroke="#ff0000" stroke-width="1.4"/><path d="M648.10 147.50H655.50V155.40H598.00V440" fill="none" stroke="#0000ff" stroke-width="1.4"/><line x1="574.90" y1="146.50" x2="602.60" y2="146.50" stroke="#444" stroke-width="0.7"/><text x="579.50" y="145.00" font-family="Liberation Sans, sans-serif" font-size="7.75" fill="#3c3c3c" xml:space="preserve">12/17</text><path d="M601.10 146.80H604.10L602.60 149.40Z M601.10 152.00H604.10L602.60 149.40Z" fill="none" stroke="#4a4a4a" stroke-width="0.5"/><line x1="602.60" y1="146.20" x2="602.60" y2="152.60" stroke="#4a4a4a" stroke-width="0.5"/><path d="M601.10 152.80H604.10L602.60 155.40Z M601.10 158.00H604.10L602.60 155.40Z" fill="none" stroke="#4a4a4a" stroke-width="0.5"/><line x1="602.60" y1="152.20" x2="602.60" y2="158.60" stroke="#4a4a4a" stroke-width="0.5"/><text x="609.10" y="116.90" font-family="Liberation Sans, sans-serif" font-size="7.75" fill="#3c3c3c" xml:space="preserve">Cusine 1.5</text><text x="609.10" y="123.50" font-family="Liberation Sans, sans-serif" font-size="7.75" fill="#3c3c3c" xml:space="preserve">20 °C</text><text x="609.10" y="130.50" font-family="Liberation Sans, sans-serif" font-size="7.75" fill="#3c3c3c" xml:space="preserve">750  W</text><rect x="620.00" y="176.95" width="28.1" height="29.4" fill="none" stroke="#ff8c8c" stroke-width="1"/><path d="M620.00 179.75H612.10V204.15H592.10" fill="none" stroke="#ff0000" stroke-width="1.4"/><path d="M648.10 202.25H655.50V210.15H598.00" fill="none" stroke="#0000ff" stroke-width="1.4"/><line x1="574.90" y1="201.25" x2="602.60" y2="201.25" stroke="#444" stroke-width="0.7"/><text x="579.50" y="199.75" font-family="Liberation Sans, sans-serif" font-size="7.75" fill="#3c3c3c" xml:space="preserve">12/17</text><path d="M601.10 201.55H604.10L602.60 204.15Z M601.10 206.75H604.10L602.60 204.15Z" fill="none" stroke="#4a4a4a" stroke-width="0.5"/><line x1="602.60" y1="200.95" x2="602.60" y2="207.35" stroke="#4a4a4a" stroke-width="0.5"/><path d="M601.10 207.55H604.10L602.60 210.15Z M601.10 212.75H604.10L602.60 210.15Z" fill="none" stroke="#4a4a4a" stroke-width="0.5"/><line x1="602.60" y1="206.95" x2="602.60" y2="213.35" stroke="#4a4a4a" stroke-width="0.5"/><text x="554.90" y="171.45" font-family="Liberation Sans, sans-serif" font-size="7.75" fill="#3c3c3c" xml:space="preserve">12/17</text><text x="609.10" y="171.53" font-family="Liberation Sans, sans-serif" font-size="7.75" fill="#3c3c3c" xml:space="preserve">Cusine 1.4</text><text x="609.10" y="178.13" font-family="Liberation Sans, sans-serif" font-size="7.75" fill="#3c3c3c" xml:space="preserve">20 °C</text><text x="609.10" y="185.13" font-family="Liberation Sans, sans-serif" font-size="7.75" fill="#3c3c3c" xml:space="preserve">650  W</text><rect x="620.00" y="231.70" width="28.1" height="29.4" fill="none" stroke="#ff8c8c" stroke-width="1"/><path d="M620.00 234.50H612.10V258.90H592.10" fill="none" stroke="#ff0000" stroke-width="1.4"/><path d="M648.10 257.00H655.50V264.90H598.00" fill="none" stroke="#0000ff" stroke-width="1.4"/><line x1="574.90" y1="256.00" x2="602.60" y2="256.00" stroke="#444" stroke-width="0.7"/><text x="579.50" y="254.50" font-family="Liberation Sans, sans-serif" font-size="7.75" fill="#3c3c3c" xml:space="preserve">12/17</text><path d="M601.10 256.30H604.10L602.60 258.90Z M601.10 261.50H604.10L602.60 258.90Z" fill="none" stroke="#4a4a4a" stroke-width="0.5"/><line x1="602.60" y1="255.70" x2="602.60" y2="262.10" stroke="#4a4a4a" stroke-width="0.5"/><path d="M601.10 262.30H604.10L602.60 264.90Z M601.10 267.50H604.10L602.60 264.90Z" fill="none" stroke="#4a4a4a" stroke-width="0.5"/><line x1="602.60" y1="261.70" x2="602.60" y2="268.10" stroke="#4a4a4a" stroke-width="0.5"/><text x="554.90" y="226.20" font-family="Liberation Sans, sans-serif" font-size="7.75" fill="#3c3c3c" xml:space="preserve">12/17</text><text x="609.10" y="226.16" font-family="Liberation Sans, sans-serif" font-size="7.75" fill="#3c3c3c" xml:space="preserve">Cusine 1.3</text><text x="609.10" y="232.76" font-family="Liberation Sans, sans-serif" font-size="7.75" fill="#3c3c3c" xml:space="preserve">20 °C</text><text x="609.10" y="239.76" font-family="Liberation Sans, sans-serif" font-size="7.75" fill="#3c3c3c" xml:space="preserve">650  W</text><rect x="620.00" y="286.45" width="28.1" height="29.4" fill="none" stroke="#ff8c8c" stroke-width="1"/><path d="M620.00 289.25H612.10V313.65H592.10" fill="none" stroke="#ff0000" stroke-width="1.4"/><path d="M648.10 311.75H655.50V319.65H598.00" fill="none" stroke="#0000ff" stroke-width="1.4"/><line x1="574.90" y1="310.75" x2="602.60" y2="310.75" stroke="#444" stroke-width="0.7"/><text x="579.50" y="309.25" font-family="Liberation Sans, sans-serif" font-size="7.75" fill="#3c3c3c" xml:space="preserve">12/17</text><path d="M601.10 311.05H604.10L602.60 313.65Z M601.10 316.25H604.10L602.60 313.65Z" fill="none" stroke="#4a4a4a" stroke-width="0.5"/><line x1="602.60" y1="310.45" x2="602.60" y2="316.85" stroke="#4a4a4a" stroke-width="0.5"/><path d="M601.10 317.05H604.10L602.60 319.65Z M601.10 322.25H604.10L602.60 319.65Z" fill="none" stroke="#4a4a4a" stroke-width="0.5"/><line x1="602.60" y1="316.45" x2="602.60" y2="322.85" stroke="#4a4a4a" stroke-width="0.5"/><text x="554.90" y="280.95" font-family="Liberation Sans, sans-serif" font-size="7.75" fill="#3c3c3c" xml:space="preserve">12/17</text><text x="609.10" y="280.79" font-family="Liberation Sans, sans-serif" font-size="7.75" fill="#3c3c3c" xml:space="preserve">Cusine 1.2</text><text x="609.10" y="287.39" font-family="Liberation Sans, sans-serif" font-size="7.75" fill="#3c3c3c" xml:space="preserve">20 °C</text><text x="609.10" y="294.39" font-family="Liberation Sans, sans-serif" font-size="7.75" fill="#3c3c3c" xml:space="preserve">650  W</text><rect x="620.00" y="341.20" width="28.1" height="29.4" fill="none" stroke="#ff8c8c" stroke-width="1"/><path d="M620.00 344.00H612.10V368.40H592.10" fill="none" stroke="#ff0000" stroke-width="1.4"/><path d="M648.10 366.50H655.50V374.40H598.00" fill="none" stroke="#0000ff" stroke-width="1.4"/><line x1="574.90" y1="365.50" x2="602.60" y2="365.50" stroke="#444" stroke-width="0.7"/><text x="579.50" y="364.00" font-family="Liberation Sans, sans-serif" font-size="7.75" fill="#3c3c3c" xml:space="preserve">12/17</text><path d="M601.10 365.80H604.10L602.60 368.40Z M601.10 371.00H604.10L602.60 368.40Z" fill="none" stroke="#4a4a4a" stroke-width="0.5"/><line x1="602.60" y1="365.20" x2="602.60" y2="371.60" stroke="#4a4a4a" stroke-width="0.5"/><path d="M601.10 371.80H604.10L602.60 374.40Z M601.10 377.00H604.10L602.60 374.40Z" fill="none" stroke="#4a4a4a" stroke-width="0.5"/><line x1="602.60" y1="371.20" x2="602.60" y2="377.60" stroke="#4a4a4a" stroke-width="0.5"/><text x="554.90" y="335.70" font-family="Liberation Sans, sans-serif" font-size="7.75" fill="#3c3c3c" xml:space="preserve">12/17</text><text x="609.10" y="335.42" font-family="Liberation Sans, sans-serif" font-size="7.75" fill="#3c3c3c" xml:space="preserve">Cusine 1.1</text><text x="609.10" y="342.02" font-family="Liberation Sans, sans-serif" font-size="7.75" fill="#3c3c3c" xml:space="preserve">20 °C</text><text x="609.10" y="349.02" font-family="Liberation Sans, sans-serif" font-size="7.75" fill="#3c3c3c" xml:space="preserve">750  W</text><rect x="729.50" y="122.20" width="28.1" height="29.4" fill="none" stroke="#ff8c8c" stroke-width="1"/><path d="M729.50 125.00H721.60V149.40H701.60V493" fill="none" stroke="#ff0000" stroke-width="1.4"/><path d="M757.60 147.50H765.00V155.40H707.50V493" fill="none" stroke="#0000ff" stroke-width="1.4"/><line x1="684.40" y1="146.50" x2="712.10" y2="146.50" stroke="#444" stroke-width="0.7"/><text x="689.00" y="145.00" font-family="Liberation Sans, sans-serif" font-size="7.75" fill="#3c3c3c" xml:space="preserve">12/17</text><path d="M710.60 146.80H713.60L712.10 149.40Z M710.60 152.00H713.60L712.10 149.40Z" fill="none" stroke="#4a4a4a" stroke-width="0.5"/><line x1="712.10" y1="146.20" x2="712.10" y2="152.60" stroke="#4a4a4a" stroke-width="0.5"/><path d="M710.60 152.80H713.60L712.10 155.40Z M710.60 158.00H713.60L712.10 155.40Z" fill="none" stroke="#4a4a4a" stroke-width="0.5"/><line x1="712.10" y1="152.20" x2="712.10" y2="158.60" stroke="#4a4a4a" stroke-width="0.5"/><text x="718.60" y="116.90" font-family="Liberation Sans, sans-serif" font-size="7.75" fill="#3c3c3c" xml:space="preserve">Séjour 1.5</text><text x="718.60" y="123.50" font-family="Liberation Sans, sans-serif" font-size="7.75" fill="#3c3c3c" xml:space="preserve">20 °C</text><text x="718.60" y="130.50" font-family="Liberation Sans, sans-serif" font-size="7.75" fill="#3c3c3c" xml:space="preserve">1570  W</text><rect x="729.50" y="176.95" width="28.1" height="29.4" fill="none" stroke="#ff8c8c" stroke-width="1"/><path d="M729.50 179.75H721.60V204.15H701.60" fill="none" stroke="#ff0000" stroke-width="1.4"/><path d="M757.60 202.25H765.00V210.15H707.50" fill="none" stroke="#0000ff" stroke-width="1.4"/><line x1="684.40" y1="201.25" x2="712.10" y2="201.25" stroke="#444" stroke-width="0.7"/><text x="689.00" y="199.75" font-family="Liberation Sans, sans-serif" font-size="7.75" fill="#3c3c3c" xml:space="preserve">12/17</text><path d="M710.60 201.55H713.60L712.10 204.15Z M710.60 206.75H713.60L712.10 204.15Z" fill="none" stroke="#4a4a4a" stroke-width="0.5"/><line x1="712.10" y1="200.95" x2="712.10" y2="207.35" stroke="#4a4a4a" stroke-width="0.5"/><path d="M710.60 207.55H713.60L712.10 210.15Z M710.60 212.75H713.60L712.10 210.15Z" fill="none" stroke="#4a4a4a" stroke-width="0.5"/><line x1="712.10" y1="206.95" x2="712.10" y2="213.35" stroke="#4a4a4a" stroke-width="0.5"/><text x="664.40" y="171.45" font-family="Liberation Sans, sans-serif" font-size="7.75" fill="#3c3c3c" xml:space="preserve">12/17</text><text x="718.60" y="171.53" font-family="Liberation Sans, sans-serif" font-size="7.75" fill="#3c3c3c" xml:space="preserve">Séjour 1.4</text><text x="718.60" y="178.13" font-family="Liberation Sans, sans-serif" font-size="7.75" fill="#3c3c3c" xml:space="preserve">20 °C</text><text x="718.60" y="185.13" font-family="Liberation Sans, sans-serif" font-size="7.75" fill="#3c3c3c" xml:space="preserve">1470  W</text><rect x="729.50" y="231.70" width="28.1" height="29.4" fill="none" stroke="#ff8c8c" stroke-width="1"/><path d="M729.50 234.50H721.60V258.90H701.60" fill="none" stroke="#ff0000" stroke-width="1.4"/><path d="M757.60 257.00H765.00V264.90H707.50" fill="none" stroke="#0000ff" stroke-width="1.4"/><line x1="684.40" y1="256.00" x2="712.10" y2="256.00" stroke="#444" stroke-width="0.7"/><text x="689.00" y="254.50" font-family="Liberation Sans, sans-serif" font-size="7.75" fill="#3c3c3c" xml:space="preserve">12/17</text><path d="M710.60 256.30H713.60L712.10 258.90Z M710.60 261.50H713.60L712.10 258.90Z" fill="none" stroke="#4a4a4a" stroke-width="0.5"/><line x1="712.10" y1="255.70" x2="712.10" y2="262.10" stroke="#4a4a4a" stroke-width="0.5"/><path d="M710.60 262.30H713.60L712.10 264.90Z M710.60 267.50H713.60L712.10 264.90Z" fill="none" stroke="#4a4a4a" stroke-width="0.5"/><line x1="712.10" y1="261.70" x2="712.10" y2="268.10" stroke="#4a4a4a" stroke-width="0.5"/><text x="664.40" y="226.20" font-family="Liberation Sans, sans-serif" font-size="7.75" fill="#3c3c3c" xml:space="preserve">12/17</text><text x="718.60" y="226.16" font-family="Liberation Sans, sans-serif" font-size="7.75" fill="#3c3c3c" xml:space="preserve">Séjour 1.3</text><text x="718.60" y="232.76" font-family="Liberation Sans, sans-serif" font-size="7.75" fill="#3c3c3c" xml:space="preserve">20 °C</text><text x="718.60" y="239.76" font-family="Liberation Sans, sans-serif" font-size="7.75" fill="#3c3c3c" xml:space="preserve">1470  W</text><rect x="729.50" y="286.45" width="28.1" height="29.4" fill="none" stroke="#ff8c8c" stroke-width="1"/><path d="M729.50 289.25H721.60V313.65H701.60" fill="none" stroke="#ff0000" stroke-width="1.4"/><path d="M757.60 311.75H765.00V319.65H707.50" fill="none" stroke="#0000ff" stroke-width="1.4"/><line x1="684.40" y1="310.75" x2="712.10" y2="310.75" stroke="#444" stroke-width="0.7"/><text x="689.00" y="309.25" font-family="Liberation Sans, sans-serif" font-size="7.75" fill="#3c3c3c" xml:space="preserve">12/17</text><path d="M710.60 311.05H713.60L712.10 313.65Z M710.60 316.25H713.60L712.10 313.65Z" fill="none" stroke="#4a4a4a" stroke-width="0.5"/><line x1="712.10" y1="310.45" x2="712.10" y2="316.85" stroke="#4a4a4a" stroke-width="0.5"/><path d="M710.60 317.05H713.60L712.10 319.65Z M710.60 322.25H713.60L712.10 319.65Z" fill="none" stroke="#4a4a4a" stroke-width="0.5"/><line x1="712.10" y1="316.45" x2="712.10" y2="322.85" stroke="#4a4a4a" stroke-width="0.5"/><text x="664.40" y="280.95" font-family="Liberation Sans, sans-serif" font-size="7.75" fill="#3c3c3c" xml:space="preserve">12/17</text><text x="718.60" y="280.79" font-family="Liberation Sans, sans-serif" font-size="7.75" fill="#3c3c3c" xml:space="preserve">Séjour 1.2</text><text x="718.60" y="287.39" font-family="Liberation Sans, sans-serif" font-size="7.75" fill="#3c3c3c" xml:space="preserve">20 °C</text><text x="718.60" y="294.39" font-family="Liberation Sans, sans-serif" font-size="7.75" fill="#3c3c3c" xml:space="preserve">1470  W</text><rect x="729.50" y="341.20" width="28.1" height="29.4" fill="none" stroke="#ff8c8c" stroke-width="1"/><path d="M729.50 344.00H721.60V368.40H701.60" fill="none" stroke="#ff0000" stroke-width="1.4"/><path d="M757.60 366.50H765.00V374.40H707.50" fill="none" stroke="#0000ff" stroke-width="1.4"/><line x1="684.40" y1="365.50" x2="712.10" y2="365.50" stroke="#444" stroke-width="0.7"/><text x="689.00" y="364.00" font-family="Liberation Sans, sans-serif" font-size="7.75" fill="#3c3c3c" xml:space="preserve">12/17</text><path d="M710.60 365.80H713.60L712.10 368.40Z M710.60 371.00H713.60L712.10 368.40Z" fill="none" stroke="#4a4a4a" stroke-width="0.5"/><line x1="712.10" y1="365.20" x2="712.10" y2="371.60" stroke="#4a4a4a" stroke-width="0.5"/><path d="M710.60 371.80H713.60L712.10 374.40Z M710.60 377.00H713.60L712.10 374.40Z" fill="none" stroke="#4a4a4a" stroke-width="0.5"/><line x1="712.10" y1="371.20" x2="712.10" y2="377.60" stroke="#4a4a4a" stroke-width="0.5"/><text x="664.40" y="335.70" font-family="Liberation Sans, sans-serif" font-size="7.75" fill="#3c3c3c" xml:space="preserve">12/17</text><text x="718.60" y="335.42" font-family="Liberation Sans, sans-serif" font-size="7.75" fill="#3c3c3c" xml:space="preserve">Séjour 1.1</text><text x="718.60" y="342.02" font-family="Liberation Sans, sans-serif" font-size="7.75" fill="#3c3c3c" xml:space="preserve">20 °C</text><text x="718.60" y="349.02" font-family="Liberation Sans, sans-serif" font-size="7.75" fill="#3c3c3c" xml:space="preserve">1570  W</text><rect x="729.50" y="395.95" width="28.1" height="29.4" fill="none" stroke="#ff8c8c" stroke-width="1"/><path d="M729.50 398.75H721.60V423.15H701.60" fill="none" stroke="#ff0000" stroke-width="1.4"/><path d="M757.60 421.25H765.00V429.15H707.50" fill="none" stroke="#0000ff" stroke-width="1.4"/><line x1="684.40" y1="420.25" x2="712.10" y2="420.25" stroke="#444" stroke-width="0.7"/><text x="689.00" y="418.75" font-family="Liberation Sans, sans-serif" font-size="7.75" fill="#3c3c3c" xml:space="preserve">12/17</text><path d="M710.60 420.55H713.60L712.10 423.15Z M710.60 425.75H713.60L712.10 423.15Z" fill="none" stroke="#4a4a4a" stroke-width="0.5"/><line x1="712.10" y1="419.95" x2="712.10" y2="426.35" stroke="#4a4a4a" stroke-width="0.5"/><path d="M710.60 426.55H713.60L712.10 429.15Z M710.60 431.75H713.60L712.10 429.15Z" fill="none" stroke="#4a4a4a" stroke-width="0.5"/><line x1="712.10" y1="425.95" x2="712.10" y2="432.35" stroke="#4a4a4a" stroke-width="0.5"/><text x="664.40" y="390.45" font-family="Liberation Sans, sans-serif" font-size="7.75" fill="#3c3c3c" xml:space="preserve">12/17</text><text x="718.60" y="390.05" font-family="Liberation Sans, sans-serif" font-size="7.75" fill="#3c3c3c" xml:space="preserve">Séjour 1.0</text><text x="718.60" y="396.65" font-family="Liberation Sans, sans-serif" font-size="7.75" fill="#3c3c3c" xml:space="preserve">20 °C</text><text x="718.60" y="403.65" font-family="Liberation Sans, sans-serif" font-size="7.75" fill="#3c3c3c" xml:space="preserve">1570  W</text></g><rect x="1013.20" y="54.20" width="11.20" height="504.00" fill="#ffffff"/><rect x="1013.20" y="54.20" width="0.80" height="504.00" fill="#8a8a8a"/><rect x="1013.60" y="54.20" width="10.80" height="10.60" fill="#6a6a6a"/><rect x="1013.60" y="54.20" width="9.80" height="9.60" fill="#ffffff"/><rect x="1014.40" y="55.00" width="9.00" height="8.80" fill="#f0f0f0"/><rect x="1013.60" y="300.20" width="10.80" height="5.60" fill="#6a6a6a"/><rect x="1013.60" y="300.20" width="9.80" height="4.60" fill="#ffffff"/><rect x="1014.40" y="301.00" width="9.00" height="3.80" fill="#f0f0f0"/><rect x="1013.60" y="558.40" width="10.80" height="10.80" fill="#6a6a6a"/><rect x="1013.60" y="558.40" width="9.80" height="9.80" fill="#ffffff"/><rect x="1014.40" y="559.20" width="9.00" height="9.00" fill="#f0f0f0"/><rect x="3.00" y="558.20" width="1010.00" height="11.00" fill="#ffffff"/><rect x="3.00" y="558.20" width="1010.00" height="0.80" fill="#8a8a8a"/><rect x="3.60" y="558.40" width="11.80" height="10.80" fill="#6a6a6a"/><rect x="3.60" y="558.40" width="10.80" height="9.80" fill="#ffffff"/><rect x="4.40" y="559.20" width="10.00" height="9.00" fill="#f0f0f0"/><rect x="1001.20" y="558.40" width="11.00" height="10.80" fill="#6a6a6a"/><rect x="1001.20" y="558.40" width="10.00" height="9.80" fill="#ffffff"/><rect x="1002.00" y="559.20" width="9.20" height="9.00" fill="#f0f0f0"/><rect x="450.40" y="558.40" width="5.60" height="11.00" fill="#6a6a6a"/><rect x="450.40" y="558.40" width="4.60" height="10.00" fill="#ffffff"/><rect x="451.20" y="559.20" width="3.80" height="9.20" fill="#f0f0f0"/><g fill="#111">
<path d="M1016.6 60.6 L1021.4 60.6 L1019 57.8 Z"/><path d="M1016.6 562.4 L1021.4 562.4 L1019 565.2 Z"/>
<path d="M10.2 561.2 L10.2 566.4 L7.4 563.8 Z"/><path d="M1005.4 561.2 L1005.4 566.4 L1008.2 563.8 Z"/></g><rect x="1024.40" y="52.60" width="1.60" height="521.40" fill="#3f8c8c"/></svg>
<svg style="position:absolute;left:6px;top:1px" width="13" height="13" viewBox="0 0 13 13">
<rect x="0.6" y="0.8" width="10.6" height="10.6" fill="#8f1d1d"/>
<g stroke="#f3e9e9" stroke-width="0.9"><line x1="3.1" y1="1.2" x2="3.1" y2="10.6"/><line x1="5.5" y1="1.2" x2="5.5" y2="10.6"/><line x1="7.9" y1="1.2" x2="7.9" y2="10.6"/></g>
<rect x="10" y="9.6" width="1.4" height="1.8" fill="#4040c0"/>
</svg>
<span class="t" style="top:2.11px;font-size:9.2px;line-height:12px;color:#8c8c8c;left:21.80px;transform:scaleX(0.943);transform-origin:0 0;">D:\VBetude\2023-08-25 - Perte de charge - Version 2\Dossiers\Immeuble-3.pdc</span>
<svg style="position:absolute;left:930px;top:0" width="96" height="18" viewBox="0 0 96 18">
<g stroke="#8a8a8a" stroke-width="0.8" fill="none">
<line x1="8.9" y1="7.5" x2="16.4" y2="7.5"/>
<rect x="41.7" y="3.5" width="7" height="7" rx="1"/>
<line x1="75" y1="3.4" x2="82.4" y2="10.6"/><line x1="82.4" y1="3.4" x2="75" y2="10.6"/>
</g></svg>
<span class="t" style="top:19.81px;font-size:9.2px;line-height:12px;color:#6e6e6e;left:5.60px;transform:scaleX(0.93);transform-origin:0 0;">Fichier</span>
<span class="t" style="top:19.81px;font-size:9.2px;line-height:12px;color:#6e6e6e;left:41.20px;transform:scaleX(0.93);transform-origin:0 0;">Edition</span>
<span class="t" style="top:19.81px;font-size:9.2px;line-height:12px;color:#6e6e6e;left:78.30px;transform:scaleX(0.93);transform-origin:0 0;">Affichage</span>
<span class="t" style="top:19.81px;font-size:9.2px;line-height:12px;color:#6e6e6e;left:125.30px;transform:scaleX(0.93);transform-origin:0 0;">Calculs</span>
<span class="t" style="top:19.81px;font-size:9.2px;line-height:12px;color:#6e6e6e;left:163.20px;transform:scaleX(0.93);transform-origin:0 0;">Options</span>
<span class="t" style="top:19.81px;font-size:9.2px;line-height:12px;color:#6e6e6e;left:203.60px;transform:scaleX(0.93);transform-origin:0 0;">Bibliothèques</span>
<span class="t" style="top:19.81px;font-size:9.2px;line-height:12px;color:#6e6e6e;left:266.30px;transform:scaleX(0.93);transform-origin:0 0;">Aide</span>
<div style="position:absolute;left:263.0px;top:166.7px;width:499.9px;height:324.6px;background:#f1f1f1;border-radius:3px;box-shadow:0 0 0 .7px rgba(0,0,0,.13),0 4px 10px rgba(0,0,0,.19),0 1px 2px rgba(0,0,0,.06);overflow:hidden">
<div style="position:absolute;left:-263.0px;top:-166.7px;width:1026px;height:670px">
<svg style="position:absolute;left:0;top:0" width="1026" height="670" viewBox="0 0 1026 670"><rect x="748.10" y="172.20" width="13.80" height="13.70" fill="#c75050"/><rect x="263.20" y="188.90" width="496.20" height="1.00" fill="#7c7c86"/><rect x="263.30" y="188.90" width="1.50" height="303.10" fill="#7a7a7a"/><rect x="758.70" y="189.90" width="1.10" height="302.10" fill="#ffffff"/><rect x="264.90" y="190.00" width="483.30" height="291.00" fill="#fbf366"/><rect x="264.90" y="213.02" width="483.30" height="1.05" fill="#f4f0c4"/><rect x="264.90" y="224.68" width="483.30" height="1.05" fill="#f4f0c4"/><rect x="264.90" y="236.34" width="483.30" height="1.05" fill="#f4f0c4"/><rect x="264.90" y="248.00" width="483.30" height="1.05" fill="#f4f0c4"/><rect x="264.90" y="259.66" width="483.30" height="1.05" fill="#f4f0c4"/><rect x="264.90" y="271.32" width="483.30" height="1.05" fill="#f4f0c4"/><rect x="264.90" y="282.98" width="483.30" height="1.05" fill="#f4f0c4"/><rect x="264.90" y="294.64" width="483.30" height="1.05" fill="#f4f0c4"/><rect x="264.90" y="317.96" width="483.30" height="1.05" fill="#f4f0c4"/><rect x="264.90" y="329.62" width="483.30" height="1.05" fill="#f4f0c4"/><rect x="264.90" y="341.28" width="483.30" height="1.05" fill="#f4f0c4"/><rect x="264.90" y="352.94" width="483.30" height="1.05" fill="#f4f0c4"/><rect x="264.90" y="364.60" width="483.30" height="1.05" fill="#f4f0c4"/><rect x="264.90" y="376.26" width="483.30" height="1.05" fill="#f4f0c4"/><rect x="264.90" y="387.92" width="483.30" height="1.05" fill="#f4f0c4"/><rect x="264.90" y="399.58" width="483.30" height="1.05" fill="#f4f0c4"/><rect x="264.90" y="411.24" width="483.30" height="1.05" fill="#f4f0c4"/><rect x="264.90" y="422.90" width="483.30" height="1.05" fill="#f4f0c4"/><rect x="264.90" y="434.56" width="483.30" height="1.05" fill="#f4f0c4"/><rect x="264.90" y="446.22" width="483.30" height="1.05" fill="#f4f0c4"/><rect x="264.90" y="457.88" width="483.30" height="1.05" fill="#f4f0c4"/><rect x="264.90" y="469.54" width="483.30" height="1.05" fill="#f4f0c4"/><rect x="385.00" y="190.00" width="1.00" height="93.28" fill="#f4f0c4"/><rect x="385.00" y="294.94" width="1.00" height="93.28" fill="#f4f0c4"/><rect x="385.00" y="411.54" width="1.00" height="69.46" fill="#f4f0c4"/><rect x="458.00" y="190.00" width="1.00" height="93.28" fill="#f4f0c4"/><rect x="458.00" y="294.94" width="1.00" height="93.28" fill="#f4f0c4"/><rect x="458.00" y="411.54" width="1.00" height="69.46" fill="#f4f0c4"/><rect x="530.10" y="190.00" width="1.00" height="93.28" fill="#f4f0c4"/><rect x="530.10" y="294.94" width="1.00" height="93.28" fill="#f4f0c4"/><rect x="530.10" y="411.54" width="1.00" height="69.46" fill="#f4f0c4"/><rect x="603.10" y="190.00" width="1.00" height="93.28" fill="#f4f0c4"/><rect x="603.10" y="294.94" width="1.00" height="93.28" fill="#f4f0c4"/><rect x="603.10" y="411.54" width="1.00" height="69.46" fill="#f4f0c4"/><rect x="675.60" y="190.00" width="1.00" height="93.28" fill="#f4f0c4"/><rect x="675.60" y="294.94" width="1.00" height="93.28" fill="#f4f0c4"/><rect x="675.60" y="411.54" width="1.00" height="69.46" fill="#f4f0c4"/></svg>
<span class="t" style="top:171.81px;font-size:9.2px;line-height:12px;color:#3a3a3a;left:270.20px;transform:scaleX(0.945);transform-origin:0 0;">Thermique : Métré.</span>
<span class="t" style="top:174.53px;font-size:8px;line-height:10px;color:#ffffff;font-weight:bold;left:555.00px;width:400px;text-align:center;transform:scaleX(1.0);transform-origin:50% 0;">x</span>
<span class="t" style="top:196.21px;font-size:9.2px;line-height:12px;color:#1c1c04;font-weight:bold;left:125.20px;width:400px;text-align:center;transform:scaleX(0.92);transform-origin:50% 0;">Désignation</span>
<span class="t" style="top:191.71px;font-size:9.2px;line-height:12px;color:#1c1c04;font-weight:bold;left:222.00px;width:400px;text-align:center;transform:scaleX(0.92);transform-origin:50% 0;">Diamètre</span>
<span class="t" style="top:200.91px;font-size:9.2px;line-height:12px;color:#1c1c04;font-weight:bold;left:222.00px;width:400px;text-align:center;transform:scaleX(0.92);transform-origin:50% 0;">nominal</span>
<span class="t" style="top:196.21px;font-size:9.2px;line-height:12px;color:#1c1c04;font-weight:bold;left:294.55px;width:400px;text-align:center;transform:scaleX(0.92);transform-origin:50% 0;">Longueur (m)</span>
<span class="t" style="top:196.21px;font-size:9.2px;line-height:12px;color:#1c1c04;font-weight:bold;left:367.10px;width:400px;text-align:center;transform:scaleX(0.92);transform-origin:50% 0;">Capacité (l)</span>
<span class="t" style="top:191.71px;font-size:9.2px;line-height:12px;color:#1c1c04;font-weight:bold;left:439.85px;width:400px;text-align:center;transform:scaleX(0.92);transform-origin:50% 0;">Surface à</span>
<span class="t" style="top:200.91px;font-size:9.2px;line-height:12px;color:#1c1c04;font-weight:bold;left:439.85px;width:400px;text-align:center;transform:scaleX(0.92);transform-origin:50% 0;">peindre (m²)</span>
<span class="t" style="top:191.71px;font-size:9.2px;line-height:12px;color:#1c1c04;font-weight:bold;left:512.15px;width:400px;text-align:center;transform:scaleX(0.92);transform-origin:50% 0;">Poids à vide</span>
<span class="t" style="top:200.91px;font-size:9.2px;line-height:12px;color:#1c1c04;font-weight:bold;left:512.15px;width:400px;text-align:center;transform:scaleX(0.92);transform-origin:50% 0;">(kg)</span>
<span class="t" style="top:301.15px;font-size:9.2px;line-height:12px;color:#1c1c04;font-weight:bold;left:125.20px;width:400px;text-align:center;transform:scaleX(0.92);transform-origin:50% 0;">Désignation</span>
<span class="t" style="top:296.65px;font-size:9.2px;line-height:12px;color:#1c1c04;font-weight:bold;left:222.00px;width:400px;text-align:center;transform:scaleX(0.92);transform-origin:50% 0;">Diamètre</span>
<span class="t" style="top:305.85px;font-size:9.2px;line-height:12px;color:#1c1c04;font-weight:bold;left:222.00px;width:400px;text-align:center;transform:scaleX(0.92);transform-origin:50% 0;">nominal</span>
<span class="t" style="top:301.15px;font-size:9.2px;line-height:12px;color:#1c1c04;font-weight:bold;left:294.55px;width:400px;text-align:center;transform:scaleX(0.92);transform-origin:50% 0;">Longueur (m)</span>
<span class="t" style="top:296.65px;font-size:9.2px;line-height:12px;color:#1c1c04;font-weight:bold;left:367.10px;width:400px;text-align:center;transform:scaleX(0.92);transform-origin:50% 0;">Conductivité</span>
<span class="t" style="top:305.85px;font-size:9.2px;line-height:12px;color:#1c1c04;font-weight:bold;left:367.10px;width:400px;text-align:center;transform:scaleX(0.92);transform-origin:50% 0;">(W/m.K)</span>
<span class="t" style="top:301.15px;font-size:9.2px;line-height:12px;color:#1c1c04;font-weight:bold;left:439.85px;width:400px;text-align:center;transform:scaleX(0.92);transform-origin:50% 0;">Epaisseur (m)</span>
<span class="t" style="top:301.15px;font-size:9.2px;line-height:12px;color:#1c1c04;font-weight:bold;left:512.15px;width:400px;text-align:center;transform:scaleX(0.92);transform-origin:50% 0;">Pertes (W/h)</span>
<span class="t" style="top:213.56px;font-size:9.4px;line-height:12px;color:#55521c;left:267.10px;transform:scaleX(0.81);transform-origin:0 0;">Acier noir</span>
<span class="t" style="top:213.56px;font-size:9.4px;line-height:12px;color:#55521c;right:568.90px;transform:scaleX(0.88);transform-origin:100% 0;">12/17</span>
<span class="t" style="top:213.56px;font-size:9.4px;line-height:12px;color:#55521c;right:496.80px;transform:scaleX(0.84);transform-origin:100% 0;">308.60</span>
<span class="t" style="top:213.56px;font-size:9.4px;line-height:12px;color:#55521c;right:423.80px;transform:scaleX(0.84);transform-origin:100% 0;">42.28</span>
<span class="t" style="top:213.56px;font-size:9.4px;line-height:12px;color:#55521c;right:351.30px;transform:scaleX(0.84);transform-origin:100% 0;">16.66</span>
<span class="t" style="top:213.56px;font-size:9.4px;line-height:12px;color:#55521c;right:279.20px;transform:scaleX(0.84);transform-origin:100% 0;">231.45</span>
<span class="t" style="top:225.22px;font-size:9.4px;line-height:12px;color:#55521c;left:267.10px;transform:scaleX(0.81);transform-origin:0 0;">Acier noir</span>
<span class="t" style="top:225.22px;font-size:9.4px;line-height:12px;color:#55521c;right:568.90px;transform:scaleX(0.88);transform-origin:100% 0;">15/21</span>
<span class="t" style="top:225.22px;font-size:9.4px;line-height:12px;color:#55521c;right:496.80px;transform:scaleX(0.84);transform-origin:100% 0;">44.80</span>
<span class="t" style="top:225.22px;font-size:9.4px;line-height:12px;color:#55521c;right:423.80px;transform:scaleX(0.84);transform-origin:100% 0;">9.68</span>
<span class="t" style="top:225.22px;font-size:9.4px;line-height:12px;color:#55521c;right:351.30px;transform:scaleX(0.84);transform-origin:100% 0;">3.00</span>
<span class="t" style="top:225.22px;font-size:9.4px;line-height:12px;color:#55521c;right:279.20px;transform:scaleX(0.84);transform-origin:100% 0;">49.28</span>
<span class="t" style="top:236.88px;font-size:9.4px;line-height:12px;color:#55521c;left:267.10px;transform:scaleX(0.81);transform-origin:0 0;">Acier noir</span>
<span class="t" style="top:236.88px;font-size:9.4px;line-height:12px;color:#55521c;right:568.90px;transform:scaleX(0.88);transform-origin:100% 0;">20/27</span>
<span class="t" style="top:236.88px;font-size:9.4px;line-height:12px;color:#55521c;right:496.80px;transform:scaleX(0.84);transform-origin:100% 0;">47.22</span>
<span class="t" style="top:236.88px;font-size:9.4px;line-height:12px;color:#55521c;right:423.80px;transform:scaleX(0.84);transform-origin:100% 0;">18.23</span>
<span class="t" style="top:236.88px;font-size:9.4px;line-height:12px;color:#55521c;right:351.30px;transform:scaleX(0.84);transform-origin:100% 0;">3.99</span>
<span class="t" style="top:236.88px;font-size:9.4px;line-height:12px;color:#55521c;right:279.20px;transform:scaleX(0.84);transform-origin:100% 0;">66.58</span>
<span class="t" style="top:248.54px;font-size:9.4px;line-height:12px;color:#55521c;left:267.10px;transform:scaleX(0.81);transform-origin:0 0;">Acier noir</span>
<span class="t" style="top:248.54px;font-size:9.4px;line-height:12px;color:#55521c;right:568.90px;transform:scaleX(0.88);transform-origin:100% 0;">26/34</span>
<span class="t" style="top:248.54px;font-size:9.4px;line-height:12px;color:#55521c;right:496.80px;transform:scaleX(0.84);transform-origin:100% 0;">34.60</span>
<span class="t" style="top:248.54px;font-size:9.4px;line-height:12px;color:#55521c;right:423.80px;transform:scaleX(0.84);transform-origin:100% 0;">21.14</span>
<span class="t" style="top:248.54px;font-size:9.4px;line-height:12px;color:#55521c;right:351.30px;transform:scaleX(0.84);transform-origin:100% 0;">3.67</span>
<span class="t" style="top:248.54px;font-size:9.4px;line-height:12px;color:#55521c;right:279.20px;transform:scaleX(0.84);transform-origin:100% 0;">76.47</span>
<span class="t" style="top:260.20px;font-size:9.4px;line-height:12px;color:#55521c;left:267.10px;transform:scaleX(0.81);transform-origin:0 0;">Acier noir</span>
<span class="t" style="top:260.20px;font-size:9.4px;line-height:12px;color:#55521c;right:568.90px;transform:scaleX(0.88);transform-origin:100% 0;">33/42</span>
<span class="t" style="top:260.20px;font-size:9.4px;line-height:12px;color:#55521c;right:496.80px;transform:scaleX(0.84);transform-origin:100% 0;">6.50</span>
<span class="t" style="top:260.20px;font-size:9.4px;line-height:12px;color:#55521c;right:423.80px;transform:scaleX(0.84);transform-origin:100% 0;">6.83</span>
<span class="t" style="top:260.20px;font-size:9.4px;line-height:12px;color:#55521c;right:351.30px;transform:scaleX(0.84);transform-origin:100% 0;">0.86</span>
<span class="t" style="top:260.20px;font-size:9.4px;line-height:12px;color:#55521c;right:279.20px;transform:scaleX(0.84);transform-origin:100% 0;">18.46</span>
<span class="t" style="top:271.93px;font-size:9.2px;line-height:12px;color:#1c1c04;font-weight:bold;right:641.90px;transform:scaleX(0.92);transform-origin:100% 0;">Totaux</span>
<span class="t" style="top:271.93px;font-size:9.2px;line-height:12px;color:#1c1c04;font-weight:bold;right:496.80px;transform:scaleX(1.0);transform-origin:100% 0;">441.72</span>
<span class="t" style="top:271.93px;font-size:9.2px;line-height:12px;color:#1c1c04;font-weight:bold;right:423.80px;transform:scaleX(1.0);transform-origin:100% 0;">98.16</span>
<span class="t" style="top:271.93px;font-size:9.2px;line-height:12px;color:#1c1c04;font-weight:bold;right:351.30px;transform:scaleX(1.0);transform-origin:100% 0;">28.18</span>
<span class="t" style="top:271.93px;font-size:9.2px;line-height:12px;color:#1c1c04;font-weight:bold;right:279.20px;transform:scaleX(1.0);transform-origin:100% 0;">442.24</span>
<span class="t" style="top:318.50px;font-size:9.4px;line-height:12px;color:#55521c;left:267.10px;transform:scaleX(0.81);transform-origin:0 0;">Calorifuge</span>
<span class="t" style="top:318.50px;font-size:9.4px;line-height:12px;color:#55521c;right:568.90px;transform:scaleX(0.88);transform-origin:100% 0;">12/17</span>
<span class="t" style="top:318.50px;font-size:9.4px;line-height:12px;color:#55521c;right:496.80px;transform:scaleX(0.84);transform-origin:100% 0;">24.90</span>
<span class="t" style="top:318.50px;font-size:9.4px;line-height:12px;color:#55521c;right:426.40px;transform:scaleX(0.84);transform-origin:100% 0;">0.03</span>
<span class="t" style="top:318.50px;font-size:9.4px;line-height:12px;color:#55521c;right:354.10px;transform:scaleX(0.84);transform-origin:100% 0;">0.03</span>
<span class="t" style="top:318.50px;font-size:9.4px;line-height:12px;color:#55521c;right:279.20px;transform:scaleX(0.84);transform-origin:100% 0;">68</span>
<span class="t" style="top:330.16px;font-size:9.4px;line-height:12px;color:#55521c;left:267.10px;transform:scaleX(0.81);transform-origin:0 0;">Calorifuge</span>
<span class="t" style="top:330.16px;font-size:9.4px;line-height:12px;color:#55521c;right:568.90px;transform:scaleX(0.88);transform-origin:100% 0;">15/21</span>
<span class="t" style="top:330.16px;font-size:9.4px;line-height:12px;color:#55521c;right:496.80px;transform:scaleX(0.84);transform-origin:100% 0;">12.80</span>
<span class="t" style="top:330.16px;font-size:9.4px;line-height:12px;color:#55521c;right:426.40px;transform:scaleX(0.84);transform-origin:100% 0;">0.03</span>
<span class="t" style="top:330.16px;font-size:9.4px;line-height:12px;color:#55521c;right:354.10px;transform:scaleX(0.84);transform-origin:100% 0;">0.03</span>
<span class="t" style="top:330.16px;font-size:9.4px;line-height:12px;color:#55521c;right:279.20px;transform:scaleX(0.84);transform-origin:100% 0;">39</span>
<span class="t" style="top:341.82px;font-size:9.4px;line-height:12px;color:#55521c;left:267.10px;transform:scaleX(0.81);transform-origin:0 0;">Calorifuge</span>
<span class="t" style="top:341.82px;font-size:9.4px;line-height:12px;color:#55521c;right:568.90px;transform:scaleX(0.88);transform-origin:100% 0;">20/27</span>
<span class="t" style="top:341.82px;font-size:9.4px;line-height:12px;color:#55521c;right:496.80px;transform:scaleX(0.84);transform-origin:100% 0;">35.62</span>
<span class="t" style="top:341.82px;font-size:9.4px;line-height:12px;color:#55521c;right:426.40px;transform:scaleX(0.84);transform-origin:100% 0;">0.03</span>
<span class="t" style="top:341.82px;font-size:9.4px;line-height:12px;color:#55521c;right:354.10px;transform:scaleX(0.84);transform-origin:100% 0;">0.03</span>
<span class="t" style="top:341.82px;font-size:9.4px;line-height:12px;color:#55521c;right:279.20px;transform:scaleX(0.84);transform-origin:100% 0;">130</span>
<span class="t" style="top:353.48px;font-size:9.4px;line-height:12px;color:#55521c;left:267.10px;transform:scaleX(0.81);transform-origin:0 0;">Calorifuge</span>
<span class="t" style="top:353.48px;font-size:9.4px;line-height:12px;color:#55521c;right:568.90px;transform:scaleX(0.88);transform-origin:100% 0;">26/34</span>
<span class="t" style="top:353.48px;font-size:9.4px;line-height:12px;color:#55521c;right:496.80px;transform:scaleX(0.84);transform-origin:100% 0;">34.60</span>
<span class="t" style="top:353.48px;font-size:9.4px;line-height:12px;color:#55521c;right:426.40px;transform:scaleX(0.84);transform-origin:100% 0;">0.03</span>
<span class="t" style="top:353.48px;font-size:9.4px;line-height:12px;color:#55521c;right:354.10px;transform:scaleX(0.84);transform-origin:100% 0;">0.03</span>
<span class="t" style="top:353.48px;font-size:9.4px;line-height:12px;color:#55521c;right:279.20px;transform:scaleX(0.84);transform-origin:100% 0;">145</span>
<span class="t" style="top:365.14px;font-size:9.4px;line-height:12px;color:#55521c;left:267.10px;transform:scaleX(0.81);transform-origin:0 0;">Calorifuge</span>
<span class="t" style="top:365.14px;font-size:9.4px;line-height:12px;color:#55521c;right:568.90px;transform:scaleX(0.88);transform-origin:100% 0;">33/42</span>
<span class="t" style="top:365.14px;font-size:9.4px;line-height:12px;color:#55521c;right:496.80px;transform:scaleX(0.84);transform-origin:100% 0;">6.50</span>
<span class="t" style="top:365.14px;font-size:9.4px;line-height:12px;color:#55521c;right:426.40px;transform:scaleX(0.84);transform-origin:100% 0;">0.03</span>
<span class="t" style="top:365.14px;font-size:9.4px;line-height:12px;color:#55521c;right:354.10px;transform:scaleX(0.84);transform-origin:100% 0;">0.03</span>
<span class="t" style="top:365.14px;font-size:9.4px;line-height:12px;color:#55521c;right:279.20px;transform:scaleX(0.84);transform-origin:100% 0;">33</span>
<span class="t" style="top:376.87px;font-size:9.2px;line-height:12px;color:#1c1c04;font-weight:bold;right:641.90px;transform:scaleX(0.92);transform-origin:100% 0;">Totaux</span>
<span class="t" style="top:376.87px;font-size:9.2px;line-height:12px;color:#1c1c04;font-weight:bold;right:496.80px;transform:scaleX(1.0);transform-origin:100% 0;">114.42</span>
<span class="t" style="top:376.87px;font-size:9.2px;line-height:12px;color:#1c1c04;font-weight:bold;right:279.20px;transform:scaleX(1.0);transform-origin:100% 0;">415</span>
<span class="t" style="top:400.09px;font-size:9.2px;line-height:12px;color:#1c1c04;font-weight:bold;left:267.10px;transform:scaleX(0.941);transform-origin:0 0;">Caractéristiques hydrauliques du circuit, hors chaufferie et éventuelle vanne 3 voies de régulation :</span>
<span class="t" style="top:411.78px;font-size:9.4px;line-height:12px;color:#55521c;left:267.10px;transform:scaleX(0.81);transform-origin:0 0;">ΔP du circuit équilibré (DaPa) :</span>
<span class="t" style="top:411.78px;font-size:9.4px;line-height:12px;color:#55521c;right:568.90px;transform:scaleX(0.84);transform-origin:100% 0;">473</span>
<span class="t" style="top:423.44px;font-size:9.4px;line-height:12px;color:#55521c;left:267.10px;transform:scaleX(0.81);transform-origin:0 0;">Débit du circuit (kg/h) :</span>
<span class="t" style="top:423.44px;font-size:9.4px;line-height:12px;color:#55521c;right:568.90px;transform:scaleX(0.84);transform-origin:100% 0;">876</span>
</div></div>
<svg style="position:absolute;left:0;top:0" width="1026" height="670" viewBox="0 0 1026 670"><rect x="0.00" y="569.20" width="1026.00" height="2.10" fill="#f2f2f2"/><rect x="3.00" y="571.30" width="1023.00" height="1.80" fill="#d6d6d6"/><rect x="3.00" y="573.10" width="1023.00" height="1.50" fill="#a4a4a4"/><rect x="0.00" y="574.60" width="1026.00" height="95.40" fill="#f0f0f0"/><rect x="1.30" y="560.00" width="1.90" height="100.20" fill="#6e6e6e"/><rect x="1024.60" y="574.60" width="1.40" height="85.40" fill="#9a9a9a"/><rect x="71.00" y="575.90" width="80.40" height="12.90" fill="#f9f9f9"/><rect x="71.00" y="575.90" width="79.30" height="11.80" fill="#6a6a6a"/><rect x="72.35" y="577.20" width="77.95" height="10.50" fill="#fff"/><rect x="71.00" y="590.35" width="57.80" height="12.90" fill="#f9f9f9"/><rect x="71.00" y="590.35" width="56.70" height="11.80" fill="#6a6a6a"/><rect x="72.35" y="591.65" width="55.35" height="10.50" fill="#fff"/><rect x="71.00" y="604.80" width="57.80" height="12.90" fill="#f9f9f9"/><rect x="71.00" y="604.80" width="56.70" height="11.80" fill="#6a6a6a"/><rect x="72.35" y="606.10" width="55.35" height="10.50" fill="#fff"/><rect x="71.00" y="619.25" width="57.80" height="12.90" fill="#f9f9f9"/><rect x="71.00" y="619.25" width="56.70" height="11.80" fill="#6a6a6a"/><rect x="72.35" y="620.55" width="55.35" height="10.50" fill="#fbf366"/><rect x="71.00" y="633.70" width="79.80" height="13.50" fill="#ffffff"/><rect x="71.00" y="633.70" width="79.30" height="12.90" fill="#6a6a6a"/><rect x="72.35" y="635.00" width="77.95" height="11.60" fill="#fff"/><rect x="139.00" y="635.00" width="11.80" height="11.50" fill="#6e6e6e"/><rect x="139.00" y="635.00" width="10.70" height="10.40" fill="#ffffff"/><rect x="139.70" y="635.70" width="10.00" height="9.70" fill="#f0f0f0"/><path d="M142.10 639.45H147.10L144.60 642.15Z" fill="#111"/><rect x="71.00" y="648.15" width="79.80" height="13.50" fill="#ffffff"/><rect x="71.00" y="648.15" width="79.30" height="12.90" fill="#6a6a6a"/><rect x="72.35" y="649.45" width="77.95" height="11.60" fill="#fff"/><rect x="139.00" y="649.45" width="11.80" height="11.50" fill="#6e6e6e"/><rect x="139.00" y="649.45" width="10.70" height="10.40" fill="#ffffff"/><rect x="139.70" y="650.15" width="10.00" height="9.70" fill="#f0f0f0"/><path d="M142.10 653.90H147.10L144.60 656.60Z" fill="#111"/><g transform="translate(12.2 576.4) scale(1.1)"><rect x="0.4" y="0.4" width="10.6" height="10.6" fill="#ececec"/><path d="M0.6 11 H11 V0.6" fill="none" stroke="#808080" stroke-width="1"/><path d="M0.6 11 V0.6 H11" fill="none" stroke="#fdfdfd" stroke-width="0.8"/><line x1="2" y1="2.6" x2="9.4" y2="2.6" stroke="#8c8c8c" stroke-width="0.9"/><line x1="2" y1="4.7" x2="9.4" y2="4.7" stroke="#8c8c8c" stroke-width="0.9"/><line x1="2" y1="6.800000000000001" x2="9.4" y2="6.800000000000001" stroke="#8c8c8c" stroke-width="0.9"/><line x1="2" y1="8.9" x2="9.4" y2="8.9" stroke="#8c8c8c" stroke-width="0.9"/></g><g transform="translate(12.2 634.2) scale(1.1)"><rect x="0.6" y="0.8" width="10.4" height="10.2" fill="#8e8e8e"/><line x1="0.6" y1="3.3" x2="11" y2="3.3" stroke="#e6e6e6" stroke-width="0.7"/><line x1="0.6" y1="5.6" x2="11" y2="5.6" stroke="#e6e6e6" stroke-width="0.7"/><line x1="0.6" y1="7.8999999999999995" x2="11" y2="7.8999999999999995" stroke="#e6e6e6" stroke-width="0.7"/><line x1="0.6" y1="10.2" x2="11" y2="10.2" stroke="#e6e6e6" stroke-width="0.7"/><line x1="4" y1="0.8" x2="4" y2="11" stroke="#e6e6e6" stroke-width="0.7"/><line x1="7.6" y1="0.8" x2="7.6" y2="11" stroke="#e6e6e6" stroke-width="0.7"/></g><g transform="translate(213.0 648.6) scale(1.1)"><rect x="0.6" y="0.8" width="10.4" height="10.2" fill="#8e8e8e"/><line x1="0.6" y1="3.3" x2="11" y2="3.3" stroke="#e6e6e6" stroke-width="0.7"/><line x1="0.6" y1="5.6" x2="11" y2="5.6" stroke="#e6e6e6" stroke-width="0.7"/><line x1="0.6" y1="7.8999999999999995" x2="11" y2="7.8999999999999995" stroke="#e6e6e6" stroke-width="0.7"/><line x1="0.6" y1="10.2" x2="11" y2="10.2" stroke="#e6e6e6" stroke-width="0.7"/><line x1="4" y1="0.8" x2="4" y2="11" stroke="#e6e6e6" stroke-width="0.7"/><line x1="7.6" y1="0.8" x2="7.6" y2="11" stroke="#e6e6e6" stroke-width="0.7"/></g><rect x="210.30" y="575.90" width="62.20" height="13.50" fill="#ffffff"/><rect x="210.30" y="575.90" width="61.70" height="12.90" fill="#6a6a6a"/><rect x="211.65" y="577.20" width="60.35" height="11.60" fill="#fff"/><rect x="260.70" y="577.20" width="11.80" height="11.50" fill="#6e6e6e"/><rect x="260.70" y="577.20" width="10.70" height="10.40" fill="#ffffff"/><rect x="261.40" y="577.90" width="10.00" height="9.70" fill="#f0f0f0"/><path d="M263.80 581.65H268.80L266.30 584.35Z" fill="#111"/><rect x="210.30" y="590.35" width="62.20" height="13.50" fill="#ffffff"/><rect x="210.30" y="590.35" width="61.70" height="12.90" fill="#6a6a6a"/><rect x="211.65" y="591.65" width="60.35" height="11.60" fill="#fff"/><rect x="260.70" y="591.65" width="11.80" height="11.50" fill="#6e6e6e"/><rect x="260.70" y="591.65" width="10.70" height="10.40" fill="#ffffff"/><rect x="261.40" y="592.35" width="10.00" height="9.70" fill="#f0f0f0"/><path d="M263.80 596.10H268.80L266.30 598.80Z" fill="#111"/><rect x="210.30" y="604.80" width="49.30" height="12.90" fill="#f9f9f9"/><rect x="210.30" y="604.80" width="48.20" height="11.80" fill="#6a6a6a"/><rect x="211.65" y="606.10" width="46.85" height="10.50" fill="#fff"/><rect x="210.30" y="619.25" width="49.30" height="12.90" fill="#f9f9f9"/><rect x="210.30" y="619.25" width="48.20" height="11.80" fill="#6a6a6a"/><rect x="211.65" y="620.55" width="46.85" height="10.50" fill="#fff"/><rect x="210.30" y="633.70" width="62.20" height="13.50" fill="#ffffff"/><rect x="210.30" y="633.70" width="61.70" height="12.90" fill="#6a6a6a"/><rect x="211.65" y="635.00" width="60.35" height="11.60" fill="#fff"/><rect x="260.70" y="635.00" width="11.80" height="11.50" fill="#6e6e6e"/><rect x="260.70" y="635.00" width="10.70" height="10.40" fill="#ffffff"/><rect x="261.40" y="635.70" width="10.00" height="9.70" fill="#f0f0f0"/><path d="M263.80 639.45H268.80L266.30 642.15Z" fill="#111"/><rect x="314.40" y="575.90" width="25.40" height="12.90" fill="#f9f9f9"/><rect x="314.40" y="575.90" width="24.30" height="11.80" fill="#6a6a6a"/><rect x="315.75" y="577.20" width="22.95" height="10.50" fill="#fbf366"/><rect x="371.00" y="575.90" width="44.60" height="12.90" fill="#f9f9f9"/><rect x="371.00" y="575.90" width="43.50" height="11.80" fill="#6a6a6a"/><rect x="372.35" y="577.20" width="42.15" height="10.50" fill="#fbf366"/><g transform="translate(420.00 577.60)"><line x1="3" y1="0.4" x2="3" y2="8.6" stroke="#3a3a5a" stroke-width="0.7"/><path d="M3 2.2L4.6 4.5L3 6.8L1.4 4.5Z" fill="#6a5a6a" stroke="#33334a" stroke-width="0.5"/></g><rect x="429.00" y="575.90" width="63.20" height="13.50" fill="#ffffff"/><rect x="429.00" y="575.90" width="62.70" height="12.90" fill="#6a6a6a"/><rect x="430.35" y="577.20" width="61.35" height="11.60" fill="#fbf366"/><rect x="480.40" y="577.20" width="11.80" height="11.50" fill="#6e6e6e"/><rect x="480.40" y="577.20" width="10.70" height="10.40" fill="#ffffff"/><rect x="481.10" y="577.90" width="10.00" height="9.70" fill="#f0f0f0"/><path d="M483.50 581.65H488.50L486.00 584.35Z" fill="#8c8c8c"/><rect x="497.80" y="578.50" width="8.90" height="8.30" fill="#f9f9f9"/><rect x="497.80" y="578.50" width="7.80" height="7.20" fill="#6a6a6a"/><rect x="499.15" y="579.80" width="6.45" height="5.90" fill="#f0f0f0"/><rect x="540.30" y="575.90" width="28.30" height="12.90" fill="#f9f9f9"/><rect x="540.30" y="575.90" width="27.20" height="11.80" fill="#6a6a6a"/><rect x="541.65" y="577.20" width="25.85" height="10.50" fill="#fbf366"/><rect x="603.00" y="575.90" width="28.60" height="12.90" fill="#f9f9f9"/><rect x="603.00" y="575.90" width="27.50" height="11.80" fill="#6a6a6a"/><rect x="604.35" y="577.20" width="26.15" height="10.50" fill="#fbf366"/><rect x="668.60" y="575.90" width="28.60" height="12.90" fill="#f9f9f9"/><rect x="668.60" y="575.90" width="27.50" height="11.80" fill="#6a6a6a"/><rect x="669.95" y="577.20" width="26.15" height="10.50" fill="#fbf366"/><rect x="731.00" y="575.90" width="28.30" height="12.90" fill="#f9f9f9"/><rect x="731.00" y="575.90" width="27.20" height="11.80" fill="#6a6a6a"/><rect x="732.35" y="577.20" width="25.85" height="10.50" fill="#fbf366"/><rect x="314.40" y="590.35" width="25.40" height="12.90" fill="#f9f9f9"/><rect x="314.40" y="590.35" width="24.30" height="11.80" fill="#6a6a6a"/><rect x="315.75" y="591.65" width="22.95" height="10.50" fill="#fbf366"/><rect x="371.00" y="590.35" width="44.60" height="12.90" fill="#f9f9f9"/><rect x="371.00" y="590.35" width="43.50" height="11.80" fill="#6a6a6a"/><rect x="372.35" y="591.65" width="42.15" height="10.50" fill="#fbf366"/><g transform="translate(420.00 592.05)"><line x1="3" y1="0.4" x2="3" y2="8.6" stroke="#3a3a5a" stroke-width="0.7"/><path d="M3 2.2L4.6 4.5L3 6.8L1.4 4.5Z" fill="#6a5a6a" stroke="#33334a" stroke-width="0.5"/></g><rect x="429.00" y="590.35" width="63.20" height="13.50" fill="#ffffff"/><rect x="429.00" y="590.35" width="62.70" height="12.90" fill="#6a6a6a"/><rect x="430.35" y="591.65" width="61.35" height="11.60" fill="#fbf366"/><rect x="480.40" y="591.65" width="11.80" height="11.50" fill="#6e6e6e"/><rect x="480.40" y="591.65" width="10.70" height="10.40" fill="#ffffff"/><rect x="481.10" y="592.35" width="10.00" height="9.70" fill="#f0f0f0"/><path d="M483.50 596.10H488.50L486.00 598.80Z" fill="#8c8c8c"/><rect x="497.80" y="592.95" width="8.90" height="8.30" fill="#f9f9f9"/><rect x="497.80" y="592.95" width="7.80" height="7.20" fill="#6a6a6a"/><rect x="499.15" y="594.25" width="6.45" height="5.90" fill="#f0f0f0"/><rect x="540.30" y="590.35" width="28.30" height="12.90" fill="#f9f9f9"/><rect x="540.30" y="590.35" width="27.20" height="11.80" fill="#6a6a6a"/><rect x="541.65" y="591.65" width="25.85" height="10.50" fill="#fbf366"/><rect x="603.00" y="590.35" width="28.60" height="12.90" fill="#f9f9f9"/><rect x="603.00" y="590.35" width="27.50" height="11.80" fill="#6a6a6a"/><rect x="604.35" y="591.65" width="26.15" height="10.50" fill="#fbf366"/><rect x="668.60" y="590.35" width="28.60" height="12.90" fill="#f9f9f9"/><rect x="668.60" y="590.35" width="27.50" height="11.80" fill="#6a6a6a"/><rect x="669.95" y="591.65" width="26.15" height="10.50" fill="#fbf366"/><rect x="731.00" y="590.35" width="28.30" height="12.90" fill="#f9f9f9"/><rect x="731.00" y="590.35" width="27.20" height="11.80" fill="#6a6a6a"/><rect x="732.35" y="591.65" width="25.85" height="10.50" fill="#fbf366"/><rect x="314.40" y="604.80" width="25.40" height="12.90" fill="#f9f9f9"/><rect x="314.40" y="604.80" width="24.30" height="11.80" fill="#6a6a6a"/><rect x="315.75" y="606.10" width="22.95" height="10.50" fill="#fbf366"/><rect x="371.00" y="604.80" width="44.60" height="12.90" fill="#f9f9f9"/><rect x="371.00" y="604.80" width="43.50" height="11.80" fill="#6a6a6a"/><rect x="372.35" y="606.10" width="42.15" height="10.50" fill="#fbf366"/><g transform="translate(420.00 606.50)"><line x1="3" y1="0.4" x2="3" y2="8.6" stroke="#3a3a5a" stroke-width="0.7"/><path d="M3 2.2L4.6 4.5L3 6.8L1.4 4.5Z" fill="#6a5a6a" stroke="#33334a" stroke-width="0.5"/></g><rect x="429.00" y="604.80" width="63.20" height="13.50" fill="#ffffff"/><rect x="429.00" y="604.80" width="62.70" height="12.90" fill="#6a6a6a"/><rect x="430.35" y="606.10" width="61.35" height="11.60" fill="#fbf366"/><rect x="480.40" y="606.10" width="11.80" height="11.50" fill="#6e6e6e"/><rect x="480.40" y="606.10" width="10.70" height="10.40" fill="#ffffff"/><rect x="481.10" y="606.80" width="10.00" height="9.70" fill="#f0f0f0"/><path d="M483.50 610.55H488.50L486.00 613.25Z" fill="#8c8c8c"/><rect x="497.80" y="607.40" width="8.90" height="8.30" fill="#f9f9f9"/><rect x="497.80" y="607.40" width="7.80" height="7.20" fill="#6a6a6a"/><rect x="499.15" y="608.70" width="6.45" height="5.90" fill="#f0f0f0"/><rect x="540.30" y="604.80" width="28.30" height="12.90" fill="#f9f9f9"/><rect x="540.30" y="604.80" width="27.20" height="11.80" fill="#6a6a6a"/><rect x="541.65" y="606.10" width="25.85" height="10.50" fill="#fbf366"/><rect x="603.00" y="604.80" width="28.60" height="12.90" fill="#f9f9f9"/><rect x="603.00" y="604.80" width="27.50" height="11.80" fill="#6a6a6a"/><rect x="604.35" y="606.10" width="26.15" height="10.50" fill="#fbf366"/><rect x="668.60" y="604.80" width="28.60" height="12.90" fill="#f9f9f9"/><rect x="668.60" y="604.80" width="27.50" height="11.80" fill="#6a6a6a"/><rect x="669.95" y="606.10" width="26.15" height="10.50" fill="#fbf366"/><rect x="731.00" y="604.80" width="28.30" height="12.90" fill="#f9f9f9"/><rect x="731.00" y="604.80" width="27.20" height="11.80" fill="#6a6a6a"/><rect x="732.35" y="606.10" width="25.85" height="10.50" fill="#fbf366"/><rect x="314.40" y="619.25" width="25.40" height="12.90" fill="#f9f9f9"/><rect x="314.40" y="619.25" width="24.30" height="11.80" fill="#6a6a6a"/><rect x="315.75" y="620.55" width="22.95" height="10.50" fill="#fff"/><rect x="371.00" y="619.25" width="44.60" height="12.90" fill="#f9f9f9"/><rect x="371.00" y="619.25" width="43.50" height="11.80" fill="#6a6a6a"/><rect x="372.35" y="620.55" width="42.15" height="10.50" fill="#fff"/><g transform="translate(420.00 620.95)"><line x1="3" y1="0.4" x2="3" y2="8.6" stroke="#3a3a5a" stroke-width="0.7"/><path d="M3 2.2L4.6 4.5L3 6.8L1.4 4.5Z" fill="#6a5a6a" stroke="#33334a" stroke-width="0.5"/></g><rect x="429.00" y="619.25" width="63.20" height="13.50" fill="#ffffff"/><rect x="429.00" y="619.25" width="62.70" height="12.90" fill="#6a6a6a"/><rect x="430.35" y="620.55" width="61.35" height="11.60" fill="#fff"/><rect x="480.40" y="620.55" width="11.80" height="11.50" fill="#6e6e6e"/><rect x="480.40" y="620.55" width="10.70" height="10.40" fill="#ffffff"/><rect x="481.10" y="621.25" width="10.00" height="9.70" fill="#f0f0f0"/><path d="M483.50 625.00H488.50L486.00 627.70Z" fill="#111"/><rect x="497.80" y="621.85" width="8.90" height="8.30" fill="#f9f9f9"/><rect x="497.80" y="621.85" width="7.80" height="7.20" fill="#6a6a6a"/><rect x="499.15" y="623.15" width="6.45" height="5.90" fill="#fff"/><rect x="540.30" y="619.25" width="28.30" height="12.90" fill="#f9f9f9"/><rect x="540.30" y="619.25" width="27.20" height="11.80" fill="#6a6a6a"/><rect x="541.65" y="620.55" width="25.85" height="10.50" fill="#fbf366"/><rect x="603.00" y="619.25" width="28.60" height="12.90" fill="#f9f9f9"/><rect x="603.00" y="619.25" width="27.50" height="11.80" fill="#6a6a6a"/><rect x="604.35" y="620.55" width="26.15" height="10.50" fill="#fbf366"/><rect x="668.60" y="619.25" width="28.60" height="12.90" fill="#f9f9f9"/><rect x="668.60" y="619.25" width="27.50" height="11.80" fill="#6a6a6a"/><rect x="669.95" y="620.55" width="26.15" height="10.50" fill="#fbf366"/><rect x="731.00" y="619.25" width="28.30" height="12.90" fill="#f9f9f9"/><rect x="731.00" y="619.25" width="27.20" height="11.80" fill="#6a6a6a"/><rect x="732.35" y="620.55" width="25.85" height="10.50" fill="#fbf366"/><rect x="668.60" y="633.70" width="28.60" height="12.90" fill="#f9f9f9"/><rect x="668.60" y="633.70" width="27.50" height="11.80" fill="#6a6a6a"/><rect x="669.95" y="635.00" width="26.15" height="10.50" fill="#fbf366"/><rect x="731.00" y="633.70" width="28.30" height="12.90" fill="#f9f9f9"/><rect x="731.00" y="633.70" width="27.20" height="11.80" fill="#6a6a6a"/><rect x="732.35" y="635.00" width="25.85" height="10.50" fill="#fbf366"/><rect x="763.60" y="576.00" width="85.80" height="83.60" fill="#7e7e7e"/><rect x="765.00" y="577.40" width="84.40" height="82.20" fill="#fbf366"/><rect x="781.7" y="590.5" width="38.6" height="41.6" fill="none" stroke="#ff1a00" stroke-width="1.15"/><circle cx="802.3" cy="612" r="8.2" fill="none" stroke="#3a3a20" stroke-width="0.8"/><rect x="0.00" y="659.60" width="1026.00" height="0.80" fill="#fdfdfd"/><rect x="0.00" y="660.40" width="1026.00" height="0.80" fill="#b4b4b4"/><rect x="0.00" y="661.20" width="1026.00" height="8.80" fill="#f1f1f1"/><rect x="0.80" y="661.20" width="0.90" height="8.80" fill="#a0a0a0"/><rect x="0.00" y="0.00" width="1.20" height="670.00" fill="#e8e6e0"/></svg>
<span class="t" style="top:576.84px;font-size:9.4px;line-height:12px;color:#505050;right:957.20px;transform:scaleX(0.81);transform-origin:100% 0;">Local :</span>
<span class="t" style="top:591.59px;font-size:9.4px;line-height:12px;color:#505050;right:957.20px;transform:scaleX(0.81);transform-origin:100% 0;">Ta (°C) :</span>
<span class="t" style="top:606.14px;font-size:9.4px;line-height:12px;color:#505050;right:957.20px;transform:scaleX(0.81);transform-origin:100% 0;">Déperditions (W) :</span>
<span class="t" style="top:620.79px;font-size:9.4px;line-height:12px;color:#505050;right:957.20px;transform:scaleX(0.81);transform-origin:100% 0;">Débit (kg/h) :</span>
<span class="t" style="top:635.74px;font-size:9.4px;line-height:12px;color:#505050;right:957.20px;transform:scaleX(0.81);transform-origin:100% 0;">Robinet :</span>
<span class="t" style="top:650.09px;font-size:9.4px;line-height:12px;color:#505050;right:957.20px;transform:scaleX(0.81);transform-origin:100% 0;">Rac. sortie :</span>
<span class="t" style="top:576.64px;font-size:9.4px;line-height:12px;color:#505050;left:73.80px;transform:scaleX(0.81);transform-origin:0 0;">Chambre 1.3</span>
<span class="t" style="top:591.09px;font-size:9.4px;line-height:12px;color:#505050;right:899.80px;transform:scaleX(0.84);transform-origin:100% 0;">20</span>
<span class="t" style="top:605.54px;font-size:9.4px;line-height:12px;color:#505050;right:899.80px;transform:scaleX(0.84);transform-origin:100% 0;">1150</span>
<span class="t" style="top:619.99px;font-size:9.4px;line-height:12px;color:#8a8636;right:899.80px;transform:scaleX(0.84);transform-origin:100% 0;">47</span>
<div style="position:absolute;left:73px;top:634.6999999999999px;width:65.6px;height:11px;overflow:hidden"><span class="t" style="top:0.14px;font-size:9.4px;line-height:12px;color:#505050;left:1.20px;transform:scaleX(0.81);transform-origin:0 0;">Thermostatique-Droit</span></div>
<span class="t" style="top:649.79px;font-size:9.4px;line-height:12px;color:#505050;left:74.20px;transform:scaleX(0.81);transform-origin:0 0;">Raccord-Droit</span>
<span class="t" style="top:576.94px;font-size:9.4px;line-height:12px;color:#505050;right:817.80px;transform:scaleX(0.81);transform-origin:100% 0;">Tuyauterie :</span>
<span class="t" style="top:591.79px;font-size:9.4px;line-height:12px;color:#505050;right:817.80px;transform:scaleX(0.81);transform-origin:100% 0;">Position :</span>
<span class="t" style="top:620.49px;font-size:9.4px;line-height:12px;color:#505050;right:817.80px;transform:scaleX(0.81);transform-origin:100% 0;">Isolation ép. (m) :</span>
<span class="t" style="top:635.44px;font-size:9.4px;line-height:12px;color:#505050;right:817.80px;transform:scaleX(0.81);transform-origin:100% 0;">Tube rugosité :</span>
<span class="t" style="top:606.04px;font-size:9.4px;line-height:12px;color:#505050;right:817.80px;transform:scaleX(0.81);transform-origin:100% 0;">(W/m.K) :</span>
<span class="t" style="top:604.39px;font-size:11px;line-height:14px;color:#6a2a1a;right:853.40px;transform:scaleX(0.9);transform-origin:100% 0;">λ</span>
<span class="t" style="top:606.04px;font-size:9.4px;line-height:12px;color:#505050;right:859.20px;transform:scaleX(0.81);transform-origin:100% 0;">Isolation</span>
<span class="t" style="top:576.94px;font-size:9.4px;line-height:12px;color:#505050;left:213.40px;transform:scaleX(0.81);transform-origin:0 0;">Acier noir</span>
<span class="t" style="top:591.39px;font-size:9.4px;line-height:12px;color:#505050;left:213.40px;transform:scaleX(0.81);transform-origin:0 0;">Intérieure</span>
<span class="t" style="top:634.74px;font-size:9.4px;line-height:12px;color:#505050;left:213.40px;transform:scaleX(0.81);transform-origin:0 0;">Moyenne</span>
<span class="t" style="top:576.64px;font-size:9.4px;line-height:12px;color:#505050;left:277.20px;transform:scaleX(0.81);transform-origin:0 0;">Tuy.1 (m) :</span>
<span class="t" style="top:577.28px;font-size:9px;line-height:11px;color:#3a4aa0;left:348.20px;transform:scaleX(0.9);transform-origin:0 0;">Σ</span>
<span class="t" style="top:576.61px;font-size:9.5px;line-height:12px;color:#2a2a7a;left:354.60px;transform:scaleX(0.95);transform-origin:0 0;">ζ</span>
<span class="t" style="top:576.64px;font-size:9.4px;line-height:12px;color:#505050;left:360.40px;transform:scaleX(0.81);transform-origin:0 0;">1 :</span>
<span class="t" style="top:576.64px;font-size:9.4px;line-height:12px;color:#a8a470;right:611.80px;transform:scaleX(0.84);transform-origin:100% 0;">0;0;0;0</span>
<span class="t" style="top:576.64px;font-size:9.4px;line-height:12px;color:#505050;left:512.60px;transform:scaleX(0.81);transform-origin:0 0;">(kg/h) :</span>
<span class="t" style="top:576.64px;font-size:9.4px;line-height:12px;color:#505050;left:576.80px;transform:scaleX(0.81);transform-origin:0 0;">T (°C) :</span>
<span class="t" style="top:576.64px;font-size:9.4px;line-height:12px;color:#505050;left:636.80px;transform:scaleX(0.81);transform-origin:0 0;">(DaPa) :</span>
<span class="t" style="top:576.64px;font-size:9.4px;line-height:12px;color:#505050;left:704.80px;transform:scaleX(0.81);transform-origin:0 0;">Q (W) :</span>
<span class="t" style="top:591.09px;font-size:9.4px;line-height:12px;color:#505050;left:277.20px;transform:scaleX(0.81);transform-origin:0 0;">Tuy.2 (m) :</span>
<span class="t" style="top:591.73px;font-size:9px;line-height:11px;color:#3a4aa0;left:348.20px;transform:scaleX(0.9);transform-origin:0 0;">Σ</span>
<span class="t" style="top:591.06px;font-size:9.5px;line-height:12px;color:#2a2a7a;left:354.60px;transform:scaleX(0.95);transform-origin:0 0;">ζ</span>
<span class="t" style="top:591.09px;font-size:9.4px;line-height:12px;color:#505050;left:360.40px;transform:scaleX(0.81);transform-origin:0 0;">2 :</span>
<span class="t" style="top:591.09px;font-size:9.4px;line-height:12px;color:#a8a470;right:611.80px;transform:scaleX(0.84);transform-origin:100% 0;">0;0;0;0</span>
<span class="t" style="top:591.09px;font-size:9.4px;line-height:12px;color:#505050;left:512.60px;transform:scaleX(0.81);transform-origin:0 0;">(kg/h) :</span>
<span class="t" style="top:591.09px;font-size:9.4px;line-height:12px;color:#505050;left:576.80px;transform:scaleX(0.81);transform-origin:0 0;">T (°C) :</span>
<span class="t" style="top:591.09px;font-size:9.4px;line-height:12px;color:#505050;left:636.80px;transform:scaleX(0.81);transform-origin:0 0;">(DaPa) :</span>
<span class="t" style="top:591.09px;font-size:9.4px;line-height:12px;color:#505050;left:704.80px;transform:scaleX(0.81);transform-origin:0 0;">Q (W) :</span>
<span class="t" style="top:605.54px;font-size:9.4px;line-height:12px;color:#505050;left:277.20px;transform:scaleX(0.81);transform-origin:0 0;">Tuy.3 (m) :</span>
<span class="t" style="top:606.18px;font-size:9px;line-height:11px;color:#3a4aa0;left:348.20px;transform:scaleX(0.9);transform-origin:0 0;">Σ</span>
<span class="t" style="top:605.51px;font-size:9.5px;line-height:12px;color:#2a2a7a;left:354.60px;transform:scaleX(0.95);transform-origin:0 0;">ζ</span>
<span class="t" style="top:605.54px;font-size:9.4px;line-height:12px;color:#505050;left:360.40px;transform:scaleX(0.81);transform-origin:0 0;">3 :</span>
<span class="t" style="top:605.54px;font-size:9.4px;line-height:12px;color:#a8a470;right:611.80px;transform:scaleX(0.84);transform-origin:100% 0;">0;0;0;0</span>
<span class="t" style="top:605.54px;font-size:9.4px;line-height:12px;color:#505050;left:512.60px;transform:scaleX(0.81);transform-origin:0 0;">(kg/h) :</span>
<span class="t" style="top:605.54px;font-size:9.4px;line-height:12px;color:#505050;left:576.80px;transform:scaleX(0.81);transform-origin:0 0;">T (°C) :</span>
<span class="t" style="top:605.54px;font-size:9.4px;line-height:12px;color:#505050;left:636.80px;transform:scaleX(0.81);transform-origin:0 0;">(DaPa) :</span>
<span class="t" style="top:605.54px;font-size:9.4px;line-height:12px;color:#505050;left:704.80px;transform:scaleX(0.81);transform-origin:0 0;">Q (W) :</span>
<span class="t" style="top:619.99px;font-size:9.4px;line-height:12px;color:#505050;left:277.20px;transform:scaleX(0.81);transform-origin:0 0;">Tuy.4 (m) :</span>
<span class="t" style="top:620.63px;font-size:9px;line-height:11px;color:#3a4aa0;left:348.20px;transform:scaleX(0.9);transform-origin:0 0;">Σ</span>
<span class="t" style="top:619.96px;font-size:9.5px;line-height:12px;color:#2a2a7a;left:354.60px;transform:scaleX(0.95);transform-origin:0 0;">ζ</span>
<span class="t" style="top:619.99px;font-size:9.4px;line-height:12px;color:#505050;left:360.40px;transform:scaleX(0.81);transform-origin:0 0;">4 :</span>
<span class="t" style="top:619.99px;font-size:9.4px;line-height:12px;color:#6a6a6a;right:611.80px;transform:scaleX(0.84);transform-origin:100% 0;">0;0;0;0</span>
<span class="t" style="top:619.99px;font-size:9.4px;line-height:12px;color:#505050;left:512.60px;transform:scaleX(0.81);transform-origin:0 0;">(kg/h) :</span>
<span class="t" style="top:619.99px;font-size:9.4px;line-height:12px;color:#505050;left:576.80px;transform:scaleX(0.81);transform-origin:0 0;">T (°C) :</span>
<span class="t" style="top:619.99px;font-size:9.4px;line-height:12px;color:#505050;left:636.80px;transform:scaleX(0.81);transform-origin:0 0;">(DaPa) :</span>
<span class="t" style="top:619.99px;font-size:9.4px;line-height:12px;color:#505050;left:704.80px;transform:scaleX(0.81);transform-origin:0 0;">Q (W) :</span>
<span class="t" style="top:619.99px;font-size:9.4px;line-height:12px;color:#505050;right:687.60px;transform:scaleX(0.84);transform-origin:100% 0;">1.25</span>
<span class="t" style="top:619.99px;font-size:9.4px;line-height:12px;color:#505050;left:432.40px;transform:scaleX(0.88);transform-origin:0 0;">12/17</span>
<span class="t" style="top:619.99px;font-size:9.4px;line-height:12px;color:#a8a470;right:459.00px;transform:scaleX(0.84);transform-origin:100% 0;">47</span>
<span class="t" style="top:619.99px;font-size:9.4px;line-height:12px;color:#a8a470;right:395.60px;transform:scaleX(0.84);transform-origin:100% 0;">58.30</span>
<span class="t" style="top:619.99px;font-size:9.4px;line-height:12px;color:#a8a470;right:268.00px;transform:scaleX(0.84);transform-origin:100% 0;">13</span>
<span class="t" style="top:633.84px;font-size:9.4px;line-height:12px;color:#505050;right:361.20px;transform:scaleX(0.81);transform-origin:100% 0;">Equilibrage du radiateur (DaPa) :</span>
<span class="t" style="top:634.44px;font-size:9.4px;line-height:12px;color:#505050;left:699.80px;transform:scaleX(0.81);transform-origin:0 0;">ΣQ (W) :</span>
<span class="t" style="top:605.39px;font-size:11px;line-height:14px;color:#181808;font-weight:bold;left:602.40px;width:400px;text-align:center;transform:scaleX(0.95);transform-origin:50% 0;">4</span>
<span class="t" style="top:662.84px;font-size:9.4px;line-height:12px;color:#484848;left:2.60px;transform:scaleX(0.838);transform-origin:0 0;">X = 86 ; Y = 89 - Radiateur : De Dietrich : Artis : 1100 - 33HB600 : Débit réel : 47 kg/h  ; Robinetterie diamètre : 12/17</span>
</div></body></html>
